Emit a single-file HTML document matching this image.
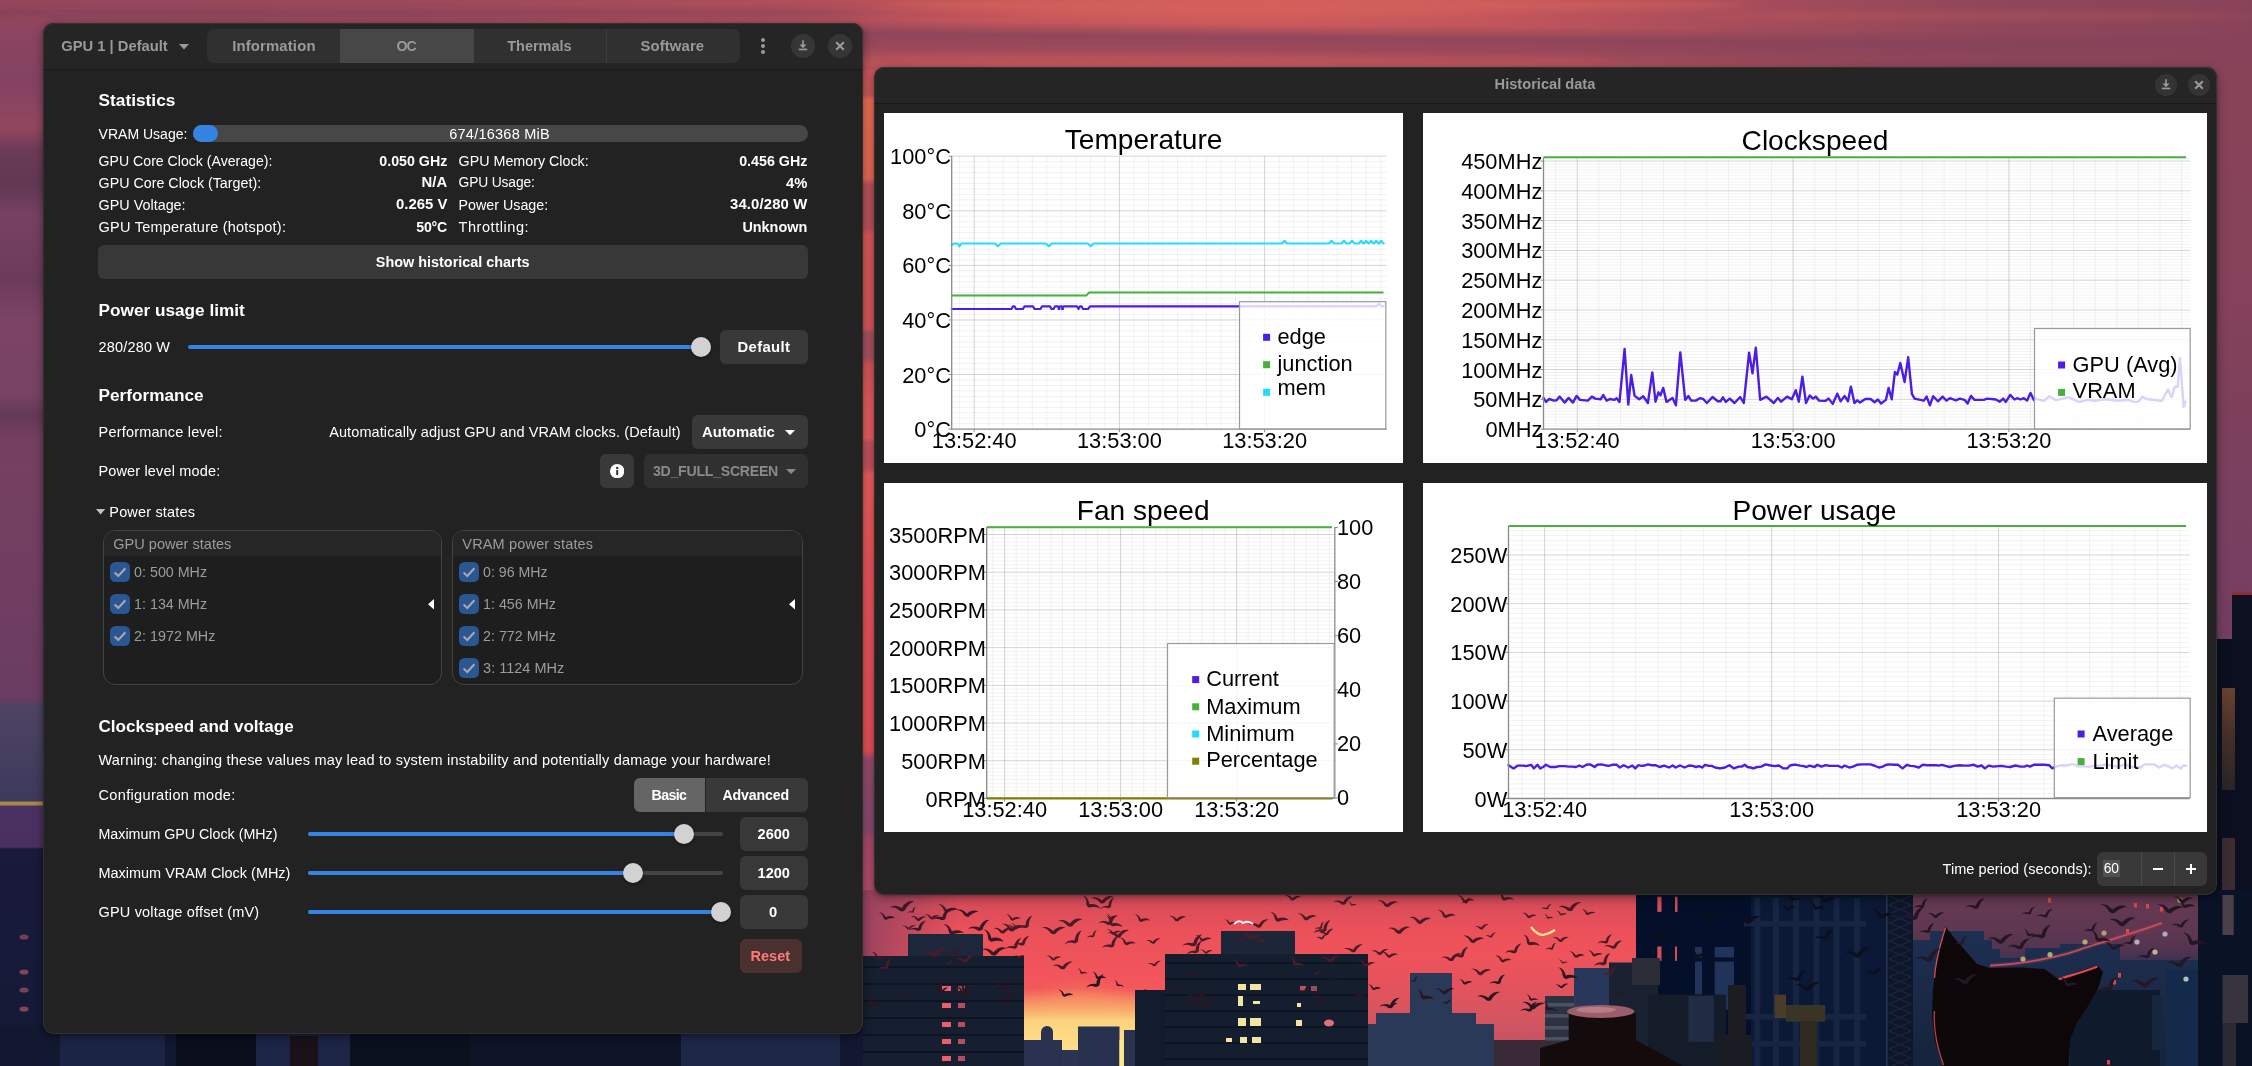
<!DOCTYPE html>
<html><head><meta charset="utf-8"><title>LACT</title><style>
html,body{margin:0;padding:0}
body{width:2252px;height:1066px;overflow:hidden;position:relative;background:#8c4560;font-family:"Liberation Sans",sans-serif}
#root{position:absolute;left:0;top:0;width:2252px;height:1066px;overflow:hidden;will-change:transform}
.b{position:absolute;display:block}
.t{position:absolute;white-space:pre;display:block}
.win{box-shadow:0 3px 10px 1px rgba(0,0,0,.30),0 1px 3px rgba(0,0,0,.22)}
</style></head>
<body><div id="root">
<svg class="b" style="left:0;top:0" width="2252" height="1066" viewBox="0 0 2252 1066"><defs><linearGradient id="top" x1="0" y1="0" x2="1" y2="0"><stop offset="0.0" stop-color="#93465b"/><stop offset="0.1776" stop-color="#9b485b"/><stop offset="0.3552" stop-color="#b04f5a"/><stop offset="0.444" stop-color="#c4565a"/><stop offset="0.5551" stop-color="#cc5b5b"/><stop offset="0.6661" stop-color="#c2555c"/><stop offset="0.7771" stop-color="#a64c5b"/><stop offset="0.8881" stop-color="#90465a"/><stop offset="1.0" stop-color="#894358"/></linearGradient><filter id="bl4" x="-5%" y="-200%" width="110%" height="500%"><feGaussianBlur stdDeviation="14 3"/></filter><linearGradient id="band" x1="0" y1="0" x2="0" y2="1"><stop offset="0" stop-color="#84425a" stop-opacity="0"/><stop offset=".3" stop-color="#84425a" stop-opacity=".8"/><stop offset=".6" stop-color="#8a4459" stop-opacity=".7"/><stop offset="1" stop-color="#8a4459" stop-opacity="0"/></linearGradient><linearGradient id="band2" x1="0" y1="0" x2="0" y2="1"><stop offset="0" stop-color="#7c3e58" stop-opacity="0"/><stop offset=".5" stop-color="#7c3e58" stop-opacity=".45"/><stop offset="1" stop-color="#7c3e58" stop-opacity="0"/></linearGradient><filter id="bl5" x="-10%" y="-100%" width="120%" height="300%"><feGaussianBlur stdDeviation="40 1"/></filter><linearGradient id="left" gradientUnits="userSpaceOnUse" x1="0" y1="20" x2="0" y2="1066"><stop offset="0.0" stop-color="#8f4560"/><stop offset="0.0574" stop-color="#834262"/><stop offset="0.1033" stop-color="#92475e"/><stop offset="0.1243" stop-color="#6c3b57"/><stop offset="0.1577" stop-color="#613853"/><stop offset="0.1864" stop-color="#784162"/><stop offset="0.2486" stop-color="#6c3b5a"/><stop offset="0.2868" stop-color="#7c4464"/><stop offset="0.3585" stop-color="#774263"/><stop offset="0.3776" stop-color="#633a55"/><stop offset="0.4015" stop-color="#754060"/><stop offset="0.4904" stop-color="#733f61"/><stop offset="0.6501" stop-color="#6a3c62"/><stop offset="0.6558" stop-color="#4e4464"/><stop offset="0.7467" stop-color="#3d3a5b"/><stop offset="0.7476" stop-color="#a88848"/><stop offset="0.7505" stop-color="#a88848"/><stop offset="0.7514" stop-color="#4b3162"/><stop offset="0.7906" stop-color="#4a3060"/><stop offset="0.7925" stop-color="#1a1a3a"/><stop offset="1.0" stop-color="#141a36"/></linearGradient><linearGradient id="gap" gradientUnits="userSpaceOnUse" x1="0" y1="55" x2="0" y2="900"><stop offset="0.0" stop-color="#c2525e"/><stop offset="0.0473" stop-color="#cc5a58"/><stop offset="0.0533" stop-color="#ee6e54"/><stop offset="0.1456" stop-color="#ea6a55"/><stop offset="0.1538" stop-color="#bc525c"/><stop offset="0.2047" stop-color="#bd535d"/><stop offset="0.213" stop-color="#de585c"/><stop offset="0.3231" stop-color="#dc575c"/><stop offset="0.329" stop-color="#ae5260"/><stop offset="0.3586" stop-color="#af5260"/><stop offset="0.3657" stop-color="#d6575c"/><stop offset="0.4083" stop-color="#e85c5e"/><stop offset="0.4533" stop-color="#ee5d5f"/><stop offset="0.4592" stop-color="#c6535d"/><stop offset="0.4888" stop-color="#c8535d"/><stop offset="0.4959" stop-color="#f45d5f"/><stop offset="0.5976" stop-color="#f0565b"/><stop offset="0.8225" stop-color="#ec5058"/><stop offset="0.8343" stop-color="#9a4c70"/><stop offset="0.9172" stop-color="#8c4c72"/><stop offset="0.929" stop-color="#ac4a6c"/><stop offset="1.0" stop-color="#ba4d6c"/></linearGradient><linearGradient id="right" gradientUnits="userSpaceOnUse" x1="0" y1="55" x2="0" y2="640"><stop offset="0.0" stop-color="#894358"/><stop offset="0.4188" stop-color="#85425a"/><stop offset="0.6239" stop-color="#7c405c"/><stop offset="0.7607" stop-color="#7a4060"/><stop offset="1.0" stop-color="#743e60"/></linearGradient><linearGradient id="panel" x1="0" y1="0" x2="0" y2="1"><stop offset="0" stop-color="#6a4230"/><stop offset="0.45" stop-color="#46302a"/><stop offset="1" stop-color="#2a2428"/></linearGradient><linearGradient id="sky2" gradientUnits="userSpaceOnUse" x1="0" y1="890" x2="0" y2="1066"><stop offset="0.0" stop-color="#cf4a58"/><stop offset="0.2386" stop-color="#ec515a"/><stop offset="0.5398" stop-color="#f3565b"/><stop offset="0.7102" stop-color="#f2625c"/><stop offset="0.8523" stop-color="#ec6a62"/><stop offset="1.0" stop-color="#e26a66"/></linearGradient><linearGradient id="mv" x1="0" y1="0" x2="0" y2="1"><stop offset="0" stop-color="#8c4162"/><stop offset="1" stop-color="#8c4162"/></linearGradient><linearGradient id="mvx" x1="0" y1="0" x2="1" y2="0"><stop offset="0" stop-color="#8c4162" stop-opacity=".85"/><stop offset="1" stop-color="#8c4162" stop-opacity="0"/></linearGradient><radialGradient id="glow" gradientUnits="userSpaceOnUse" cx="1082" cy="1082" r="105"><stop offset="0" stop-color="#fff08a"/><stop offset=".45" stop-color="#fbd67a" stop-opacity=".95"/><stop offset="1" stop-color="#f6905e" stop-opacity="0"/></radialGradient><linearGradient id="hz" gradientUnits="userSpaceOnUse" x1="0" y1="989" x2="0" y2="1066"><stop offset="0" stop-color="#f79a66" stop-opacity="0"/><stop offset=".22" stop-color="#f8a268" stop-opacity=".9"/><stop offset=".42" stop-color="#fbd47e"/><stop offset="1" stop-color="#fde68c"/></linearGradient><linearGradient id="dk" gradientUnits="userSpaceOnUse" x1="0" y1="955" x2="0" y2="1045"><stop offset="0" stop-color="#b04460" stop-opacity="0"/><stop offset="1" stop-color="#b04460" stop-opacity=".65"/></linearGradient><linearGradient id="sky3" gradientUnits="userSpaceOnUse" x1="0" y1="890" x2="0" y2="1066"><stop offset="0.0" stop-color="#683952"/><stop offset="0.2273" stop-color="#5f3750"/><stop offset="0.3409" stop-color="#523450"/><stop offset="0.4091" stop-color="#383252"/><stop offset="0.483" stop-color="#1c2b4a"/><stop offset="1.0" stop-color="#16243e"/></linearGradient><linearGradient id="bl" gradientUnits="userSpaceOnUse" x1="0" y1="930" x2="0" y2="1066"><stop offset="0.0" stop-color="#1e2f52"/><stop offset="0.5147" stop-color="#1a2946"/><stop offset="1.0" stop-color="#15233c"/></linearGradient></defs><rect x="0.0" y="0.0" width="2252.0" height="120.0" fill="url(#top)" /><g transform="rotate(0.55 860 40)"><rect x="700" y="20" width="1700" height="44" fill="url(#band)"/></g><rect x="-100" y="4" width="960" height="18" fill="url(#band2)" filter="url(#bl5)"/><ellipse cx="1315.0" cy="5" rx="435.0" ry="7" fill="#e26a5c" opacity="0.4" filter="url(#bl4)"/><ellipse cx="1250.0" cy="14" rx="250.0" ry="4" fill="#e26a5c" opacity="0.3" filter="url(#bl4)"/><ellipse cx="1976.0" cy="16" rx="276.0" ry="5" fill="#e26a5c" opacity="0.18" filter="url(#bl4)"/><rect x="700" y="56" width="900" height="14" fill="#c0545a" opacity=".35" filter="url(#bl4)"/><rect x="0.0" y="20.0" width="60.0" height="1046.0" fill="url(#left)" /><ellipse cx="24" cy="937" rx="4.5" ry="2.6" fill="#b05a6c" opacity=".6"/><ellipse cx="24" cy="972" rx="4.5" ry="2.6" fill="#c06474" opacity=".6"/><ellipse cx="24" cy="990" rx="4.5" ry="2.6" fill="#b86070" opacity=".6"/><ellipse cx="24" cy="1009" rx="4.5" ry="2.6" fill="#c86878" opacity=".6"/><ellipse cx="24" cy="1030" rx="4.5" ry="2.6" fill="#a85868" opacity=".6"/><rect x="6.0" y="1026.0" width="8.0" height="8.0" fill="#2c3c70" /><rect x="861.0" y="70.0" width="14.5" height="830.0" fill="url(#gap)" /><rect x="2205.0" y="55.0" width="47.0" height="585.0" fill="url(#right)" /><rect x="2232.0" y="592.0" width="20.0" height="48.0" fill="#0e1122" /><rect x="2232.0" y="592.0" width="20.0" height="3.0" fill="#8a3038" /><rect x="2205.0" y="639.0" width="47.0" height="427.0" fill="#0b0f1f" /><rect x="2222.0" y="688.0" width="13.0" height="102.0" fill="url(#panel)" /><rect x="2222.0" y="838.0" width="13.0" height="92.0" fill="#3a2c30" /><rect x="2222.0" y="975.0" width="13.0" height="65.0" fill="#2e2a34" /><rect x="0.0" y="1025.0" width="870.0" height="41.0" fill="#121830" /><rect x="60.0" y="1033.0" width="105.0" height="33.0" fill="#1b2444" /><rect x="256.0" y="1033.0" width="94.0" height="33.0" fill="#1c2546" /><rect x="681.0" y="1033.0" width="159.0" height="33.0" fill="#1e2748" /><rect x="176.0" y="1033.0" width="80.0" height="33.0" fill="#0b0f1c" /><rect x="350.0" y="1033.0" width="120.0" height="33.0" fill="#0c111f" /><rect x="470.0" y="1033.0" width="211.0" height="33.0" fill="#0d1526" /><rect x="290.0" y="1036.0" width="28.0" height="30.0" fill="#1a1218" /><rect x="863.0" y="890.0" width="777.0" height="176.0" fill="url(#sky2)" /><rect x="863.0" y="890.0" width="97.0" height="70.0" fill="url(#mvx)" /><rect x="1000.0" y="950.0" width="180.0" height="116.0" fill="url(#glow)" /><rect x="1022.0" y="989.0" width="114.0" height="77.0" fill="url(#hz)" /><rect x="908.0" y="934.0" width="75.0" height="23.0" fill="#1c273c" /><rect x="863.0" y="956.0" width="161.0" height="110.0" fill="#161f30" /><rect x="942.0" y="986.0" width="9.0" height="5.0" fill="#ee5e6a" /><rect x="958.0" y="986.0" width="7.0" height="5.0" fill="#b84c5c" /><rect x="942.0" y="1003.0" width="9.0" height="5.0" fill="#ee5e6a" /><rect x="958.0" y="1003.0" width="7.0" height="5.0" fill="#b84c5c" /><rect x="942.0" y="1022.0" width="9.0" height="5.0" fill="#ee5e6a" /><rect x="958.0" y="1022.0" width="7.0" height="5.0" fill="#b84c5c" /><rect x="942.0" y="1039.0" width="9.0" height="5.0" fill="#ee5e6a" /><rect x="958.0" y="1039.0" width="7.0" height="5.0" fill="#b84c5c" /><rect x="942.0" y="1056.0" width="9.0" height="5.0" fill="#ee5e6a" /><rect x="958.0" y="1056.0" width="7.0" height="5.0" fill="#b84c5c" /><rect x="863.0" y="966.0" width="161.0" height="2.0" fill="#0e1424" /><rect x="863.0" y="983.0" width="161.0" height="2.0" fill="#0e1424" /><rect x="863.0" y="1000.0" width="161.0" height="2.0" fill="#0e1424" /><rect x="863.0" y="1017.0" width="161.0" height="2.0" fill="#0e1424" /><rect x="863.0" y="1034.0" width="161.0" height="2.0" fill="#0e1424" /><rect x="863.0" y="1051.0" width="161.0" height="2.0" fill="#0e1424" /><rect x="1024.0" y="1040.0" width="38.0" height="26.0" fill="#2a3250" /><rect x="1041.0" y="1032.0" width="12.0" height="9.0" fill="#2a3250" /><circle cx="1047" cy="1032" r="6" fill="#2a3250"/><rect x="1078.0" y="1026.5" width="41.5" height="39.5" fill="#28314e" /><rect x="1062.0" y="1050.0" width="16.0" height="16.0" fill="#2c3452" /><rect x="1119.5" y="1040.0" width="3.5" height="26.0" fill="#ffe78a" /><rect x="1124.0" y="1030.0" width="12.0" height="36.0" fill="#2a3250" /><rect x="1221.0" y="931.0" width="74.0" height="24.0" fill="#1b2638" /><rect x="1165.0" y="954.0" width="203.0" height="112.0" fill="#151e2e" /><rect x="1135.0" y="990.0" width="31.0" height="76.0" fill="#131c2e" /><rect x="1165.0" y="962.0" width="203.0" height="2.0" fill="#0d1422" /><rect x="1165.0" y="978.0" width="203.0" height="2.0" fill="#0d1422" /><rect x="1165.0" y="994.0" width="203.0" height="2.0" fill="#0d1422" /><rect x="1165.0" y="1010.0" width="203.0" height="2.0" fill="#0d1422" /><rect x="1165.0" y="1026.0" width="203.0" height="2.0" fill="#0d1422" /><rect x="1165.0" y="1042.0" width="203.0" height="2.0" fill="#0d1422" /><rect x="1165.0" y="1058.0" width="203.0" height="2.0" fill="#0d1422" /><rect x="1238.0" y="984.0" width="8.0" height="6.0" fill="#f0e6a2" /><rect x="1250.0" y="984.0" width="11.0" height="6.0" fill="#f0e6a2" /><rect x="1238.0" y="996.0" width="5.0" height="10.0" fill="#f0e6a2" /><rect x="1253.0" y="1001.0" width="7.0" height="3.0" fill="#f0e6a2" /><rect x="1238.0" y="1018.0" width="8.0" height="8.0" fill="#f0e6a2" /><rect x="1250.0" y="1018.0" width="11.0" height="8.0" fill="#f0e6a2" /><rect x="1226.0" y="1038.0" width="6.0" height="4.0" fill="#f0e6a2" /><rect x="1240.0" y="1037.0" width="7.0" height="6.0" fill="#f0e6a2" /><rect x="1252.0" y="1037.0" width="9.0" height="6.0" fill="#f0e6a2" /><rect x="1296.0" y="1020.0" width="6.0" height="6.0" fill="#f0e6a2" /><rect x="1297.0" y="1003.0" width="4.0" height="4.0" fill="#f0e6a2" /><rect x="1300.0" y="986.0" width="6.0" height="5.0" fill="#c05060" /><rect x="1311.0" y="986.0" width="6.0" height="5.0" fill="#a04858" /><ellipse cx="1329" cy="1023" rx="5" ry="3.5" fill="#e07080"/><rect x="1368.0" y="955.0" width="272.0" height="111.0" fill="url(#dk)" /><rect x="1410.0" y="973.0" width="42.0" height="93.0" fill="#2a3958" /><rect x="1376.0" y="1013.0" width="100.0" height="53.0" fill="#2a3958" /><rect x="1368.0" y="1024.0" width="126.0" height="42.0" fill="#2a3958" /><rect x="1574.0" y="968.0" width="66.0" height="98.0" fill="#28385a" /><rect x="1552.0" y="996.0" width="24.0" height="70.0" fill="#2c3b5c" /><rect x="1494.0" y="1040.0" width="66.0" height="26.0" fill="#3a2a38" /><rect x="1636.0" y="890.0" width="277.0" height="176.0" fill="#04102a" /><rect x="1751.0" y="890.0" width="135.0" height="176.0" fill="#0c1936" /><rect x="1754.3" y="898.0" width="6.0" height="168.0" fill="#162542" /><rect x="1772.9" y="898.0" width="6.0" height="168.0" fill="#162542" /><rect x="1793.0" y="898.0" width="6.0" height="168.0" fill="#162542" /><rect x="1813.4" y="898.0" width="6.0" height="168.0" fill="#162542" /><rect x="1833.6" y="898.0" width="6.0" height="168.0" fill="#162542" /><rect x="1853.9" y="898.0" width="6.0" height="168.0" fill="#162542" /><rect x="1744.0" y="921.0" width="122.0" height="5.5" fill="#162542" /><rect x="1744.0" y="1014.0" width="122.0" height="5.5" fill="#162542" /><rect x="1744.0" y="1041.0" width="122.0" height="5.5" fill="#162542" /><rect x="1695.0" y="947.0" width="7.0" height="10.4" fill="#22335a" /><rect x="1695.0" y="961.7" width="7.0" height="32.9" fill="#22335a" /><rect x="1714.7" y="947.0" width="19.3" height="10.4" fill="#22335a" /><rect x="1714.7" y="961.7" width="19.3" height="48.0" fill="#22335a" /><rect x="1657.3" y="896.7" width="4.2" height="15.2" fill="#d24c5a" /><rect x="1675.0" y="896.7" width="2.5" height="15.2" fill="#d24c5a" /><rect x="1657.3" y="946.5" width="4.2" height="14.3" fill="#d24c5a" /><rect x="1675.0" y="946.5" width="2.0" height="14.3" fill="#d24c5a" /><rect x="1609.0" y="962.5" width="49.0" height="103.5" fill="#1a2232" /><rect x="1632.0" y="958.0" width="28.0" height="27.0" fill="#2a2c38" /><rect x="1648.0" y="994.6" width="78.0" height="71.4" fill="#141c2a" /><rect x="1688.5" y="996.0" width="25.3" height="45.8" fill="#1f2c44" /><rect x="1728.0" y="985.0" width="18.0" height="81.0" fill="#1c1c22" /><rect x="1716.0" y="1035.0" width="36.0" height="31.0" fill="#1a1c24" /><rect x="1774.6" y="994.6" width="11.4" height="23.4" fill="#4a3c26" /><rect x="1786.0" y="1005.0" width="39.2" height="16.6" fill="#3a3424" /><rect x="1800.0" y="1021.0" width="16.8" height="45.0" fill="#2e2a22" /><rect x="1886.0" y="890.0" width="27.0" height="176.0" fill="#0d1729" /><rect x="1886.0" y="890.0" width="1.5" height="176.0" fill="#2a3654" /><path d="M1889 896L1911 905M1911 896L1889 905" stroke="#1c2a44" stroke-width="1"/><path d="M1889 905L1911 914M1911 905L1889 914" stroke="#1c2a44" stroke-width="1"/><path d="M1889 914L1911 923M1911 914L1889 923" stroke="#1c2a44" stroke-width="1"/><path d="M1889 923L1911 932M1911 923L1889 932" stroke="#1c2a44" stroke-width="1"/><path d="M1889 932L1911 941M1911 932L1889 941" stroke="#1c2a44" stroke-width="1"/><path d="M1889 941L1911 950M1911 941L1889 950" stroke="#1c2a44" stroke-width="1"/><path d="M1889 950L1911 959M1911 950L1889 959" stroke="#1c2a44" stroke-width="1"/><path d="M1889 959L1911 968M1911 959L1889 968" stroke="#1c2a44" stroke-width="1"/><path d="M1889 968L1911 977M1911 968L1889 977" stroke="#1c2a44" stroke-width="1"/><path d="M1889 977L1911 986M1911 977L1889 986" stroke="#1c2a44" stroke-width="1"/><path d="M1889 986L1911 995M1911 986L1889 995" stroke="#1c2a44" stroke-width="1"/><path d="M1889 995L1911 1004M1911 995L1889 1004" stroke="#1c2a44" stroke-width="1"/><path d="M1889 1004L1911 1013M1911 1004L1889 1013" stroke="#1c2a44" stroke-width="1"/><path d="M1889 1013L1911 1022M1911 1013L1889 1022" stroke="#1c2a44" stroke-width="1"/><path d="M1889 1022L1911 1031M1911 1022L1889 1031" stroke="#1c2a44" stroke-width="1"/><path d="M1889 1031L1911 1040M1911 1031L1889 1040" stroke="#1c2a44" stroke-width="1"/><path d="M1889 1040L1911 1049M1911 1040L1889 1049" stroke="#1c2a44" stroke-width="1"/><path d="M1889 1049L1911 1058M1911 1049L1889 1058" stroke="#1c2a44" stroke-width="1"/><path d="M1889 1058L1911 1067M1911 1058L1889 1067" stroke="#1c2a44" stroke-width="1"/><rect x="1545.0" y="996.0" width="29.0" height="46.0" fill="#2c3242" /><rect x="1545.0" y="1003.0" width="29.0" height="3.5" fill="#4a5262" /><rect x="1545.0" y="1014.0" width="29.0" height="3.5" fill="#4a5262" /><rect x="1545.0" y="1026.0" width="29.0" height="3.5" fill="#4a5262" /><rect x="1545.0" y="1037.0" width="29.0" height="3.5" fill="#4a5262" /><path d="M1568.7 1013H1636V1040L1683 1066H1540V1048L1568.7 1040Z" fill="#140b0c"/><ellipse cx="1600.7" cy="1011.4" rx="33.7" ry="6.5" fill="#9a5e6c"/><ellipse cx="1596" cy="1009.8" rx="20" ry="3" fill="#c48a96" opacity=".7"/><rect x="1913.0" y="890.0" width="287.0" height="176.0" fill="url(#sky3)" /><path d="M1913 940H1930V931H1984V940H1992V949H2000V958H2025V948H2060V944H2120V960H2200V1066H1913Z" fill="url(#bl)"/><rect x="2166.0" y="970.0" width="33.0" height="96.0" fill="#142a4a" /><rect x="2070.0" y="990.0" width="90.0" height="76.0" fill="#0f1b2d" /><rect x="2152.0" y="995.0" width="10.0" height="55.0" fill="#16263c" /><path d="M1990 965.6C2030 964 2070 954 2084 948C2110 940 2140 931 2162 923" stroke="#d04a55" stroke-width="4.5" fill="none" opacity=".22"/><path d="M1990 965.6C2030 964 2070 954 2084 948C2110 940 2140 931 2162 923" stroke="#d8505a" stroke-width="1.7" fill="none" opacity=".9"/><circle cx="2023" cy="959" r="2.6" fill="#c8cc80" opacity=".8"/><circle cx="2050" cy="954.5" r="2.6" fill="#c8cc80" opacity=".8"/><circle cx="2085" cy="942" r="2.6" fill="#c8c888" opacity=".8"/><circle cx="2104" cy="933" r="2.6" fill="#c0b880" opacity=".8"/><circle cx="2137" cy="942" r="2.6" fill="#c8d0d8" opacity=".8"/><circle cx="2165" cy="934" r="2.6" fill="#c0c8d0" opacity=".8"/><circle cx="2155" cy="952" r="2.6" fill="#d8d8a0" opacity=".8"/><circle cx="2186" cy="979" r="2.6" fill="#e0e0e0" opacity=".8"/><circle cx="2180" cy="900" r="2.6" fill="#c0c070" opacity=".8"/><rect x="2048.0" y="898.0" width="3.0" height="4.5" fill="#d84848" /><rect x="2134.0" y="903.0" width="3.0" height="4.5" fill="#d84848" /><rect x="2146.0" y="904.0" width="3.0" height="4.5" fill="#d84848" /><rect x="2160.0" y="907.0" width="3.0" height="4.5" fill="#d84848" /><rect x="2126.0" y="929.0" width="3.0" height="4.5" fill="#d84848" /><rect x="2113.0" y="980.0" width="3.0" height="4.5" fill="#d84848" /><rect x="2118.0" y="973.0" width="3.0" height="4.5" fill="#d84848" /><rect x="2107.0" y="1060.0" width="3.0" height="4.5" fill="#d84848" /><rect x="2198.0" y="890.0" width="54.0" height="176.0" fill="#0a1226" /><rect x="2222.5" y="895.0" width="11.2" height="40.0" fill="#4a4048" /><rect x="2222.5" y="975.0" width="25.5" height="48.0" fill="#38343e" /><rect x="2222.5" y="1023.0" width="13.5" height="43.0" fill="#2a2832" /><polygon points="1943.3,1066.0 1934.5,1039.4 1932.1,1015.3 1932.9,991.3 1934.5,975.2 1940.1,947.9 1945.7,927.1 1954.5,938.3 1977.0,964.0 1989.8,968.0 2021.9,967.5 2044.4,969.1 2058.8,979.2 2076.5,972.0 2097.3,965.6 2103.0,972.0 2098.9,986.4 2089.3,1004.1 2076.5,1023.3 2070.1,1039.4 2068.5,1066.0" fill="#0d0709"/><path d="M1945.5 928C1940 945 1935.5 960 1934.6 978" stroke="#dc4e50" stroke-width="1.3" fill="none" opacity=".95"/><path d="M1934.5 1011C1933 1030 1938 1050 1943.5 1065" stroke="#c84a4c" stroke-width="1.3" fill="none" opacity=".9"/><path d="M2059.5 979C2072 975 2086 971 2096.5 967" stroke="#dc4a4a" stroke-width="2.2" fill="none" stroke-linecap="round"/><path transform="translate(1053.2 958.5) rotate(8) scale(0.71 0.60)" d="M-10 -3C-6 -5 -3 -3 0 0C3 -4 7 -6 11 -4C7 -3 4 0 2 3C0 4 -2 3 -3 1C-5 -2 -7 -3 -10 -3Z" fill="#4a1c26"/><path transform="translate(1351.8 904.4) rotate(27) scale(0.46 0.39)" d="M-10 -3C-6 -5 -3 -3 0 0C3 -4 7 -6 11 -4C7 -3 4 0 2 3C0 4 -2 3 -3 1C-5 -2 -7 -3 -10 -3Z" fill="#4a1c26"/><path transform="translate(1069.7 923.5) rotate(-2) scale(1.15 0.97)" d="M-10 -3C-6 -5 -3 -3 0 0C3 -4 7 -6 11 -4C7 -3 4 0 2 3C0 4 -2 3 -3 1C-5 -2 -7 -3 -10 -3Z" fill="#4a1c26"/><path transform="translate(1514.1 950.8) rotate(-28) scale(0.90 0.76)" d="M-10 -3C-6 -5 -3 -3 0 0C3 -4 7 -6 11 -4C7 -3 4 0 2 3C0 4 -2 3 -3 1C-5 -2 -7 -3 -10 -3Z" fill="#4a1c26"/><path transform="translate(1358.8 995.1) rotate(19) scale(0.82 0.69)" d="M-10 -3C-6 -5 -3 -3 0 0C3 -4 7 -6 11 -4C7 -3 4 0 2 3C0 4 -2 3 -3 1C-5 -2 -7 -3 -10 -3Z" fill="#2a1620"/><path transform="translate(1387.0 904.2) rotate(7) scale(0.98 0.83)" d="M-10 -3C-6 -5 -3 -3 0 0C3 -4 7 -6 11 -4C7 -3 4 0 2 3C0 4 -2 3 -3 1C-5 -2 -7 -3 -10 -3Z" fill="#4a1c26"/><path transform="translate(1102.0 900.5) rotate(-2) scale(1.06 0.90)" d="M-10 -3C-6 -5 -3 -3 0 0C3 -4 7 -6 11 -4C7 -3 4 0 2 3C0 4 -2 3 -3 1C-5 -2 -7 -3 -10 -3Z" fill="#4a1c26"/><path transform="translate(1423.5 996.3) rotate(34) scale(0.95 0.81)" d="M-10 -3C-6 -5 -3 -3 0 0C3 -4 7 -6 11 -4C7 -3 4 0 2 3C0 4 -2 3 -3 1C-5 -2 -7 -3 -10 -3Z" fill="#2a1620"/><path transform="translate(1174.1 987.5) rotate(35) scale(0.76 0.65)" d="M-10 -3C-6 -5 -3 -3 0 0C3 -4 7 -6 11 -4C7 -3 4 0 2 3C0 4 -2 3 -3 1C-5 -2 -7 -3 -10 -3Z" fill="#2a1620"/><path transform="translate(1546.7 908.0) rotate(-23) scale(0.55 0.46)" d="M-10 -3C-6 -5 -3 -3 0 0C3 -4 7 -6 11 -4C7 -3 4 0 2 3C0 4 -2 3 -3 1C-5 -2 -7 -3 -10 -3Z" fill="#4a1c26"/><path transform="translate(1613.4 946.3) rotate(-16) scale(0.89 0.76)" d="M-10 -3C-6 -5 -3 -3 0 0C3 -4 7 -6 11 -4C7 -3 4 0 2 3C0 4 -2 3 -3 1C-5 -2 -7 -3 -10 -3Z" fill="#4a1c26"/><path transform="translate(1260.6 940.6) rotate(7) scale(0.70 0.59)" d="M-10 -3C-6 -5 -3 -3 0 0C3 -4 7 -6 11 -4C7 -3 4 0 2 3C0 4 -2 3 -3 1C-5 -2 -7 -3 -10 -3Z" fill="#4a1c26"/><path transform="translate(1319.9 999.2) rotate(34) scale(0.93 0.79)" d="M-10 -3C-6 -5 -3 -3 0 0C3 -4 7 -6 11 -4C7 -3 4 0 2 3C0 4 -2 3 -3 1C-5 -2 -7 -3 -10 -3Z" fill="#2a1620"/><path transform="translate(1529.4 1009.0) rotate(-27) scale(0.92 0.78)" d="M-10 -3C-6 -5 -3 -3 0 0C3 -4 7 -6 11 -4C7 -3 4 0 2 3C0 4 -2 3 -3 1C-5 -2 -7 -3 -10 -3Z" fill="#2a1620"/><path transform="translate(1532.7 1006.0) rotate(6) scale(1.08 0.92)" d="M-10 -3C-6 -5 -3 -3 0 0C3 -4 7 -6 11 -4C7 -3 4 0 2 3C0 4 -2 3 -3 1C-5 -2 -7 -3 -10 -3Z" fill="#2a1620"/><path transform="translate(1419.6 920.9) rotate(6) scale(1.03 0.88)" d="M-10 -3C-6 -5 -3 -3 0 0C3 -4 7 -6 11 -4C7 -3 4 0 2 3C0 4 -2 3 -3 1C-5 -2 -7 -3 -10 -3Z" fill="#4a1c26"/><path transform="translate(1089.4 904.2) rotate(39) scale(1.05 0.89)" d="M-10 -3C-6 -5 -3 -3 0 0C3 -4 7 -6 11 -4C7 -3 4 0 2 3C0 4 -2 3 -3 1C-5 -2 -7 -3 -10 -3Z" fill="#4a1c26"/><path transform="translate(938.2 987.5) rotate(-28) scale(0.74 0.63)" d="M-10 -3C-6 -5 -3 -3 0 0C3 -4 7 -6 11 -4C7 -3 4 0 2 3C0 4 -2 3 -3 1C-5 -2 -7 -3 -10 -3Z" fill="#2a1620"/><path transform="translate(1096.3 983.9) rotate(-36) scale(1.06 0.90)" d="M-10 -3C-6 -5 -3 -3 0 0C3 -4 7 -6 11 -4C7 -3 4 0 2 3C0 4 -2 3 -3 1C-5 -2 -7 -3 -10 -3Z" fill="#2a1620"/><path transform="translate(1343.2 902.1) rotate(-14) scale(0.95 0.81)" d="M-10 -3C-6 -5 -3 -3 0 0C3 -4 7 -6 11 -4C7 -3 4 0 2 3C0 4 -2 3 -3 1C-5 -2 -7 -3 -10 -3Z" fill="#4a1c26"/><path transform="translate(1548.3 1007.8) rotate(40) scale(0.80 0.68)" d="M-10 -3C-6 -5 -3 -3 0 0C3 -4 7 -6 11 -4C7 -3 4 0 2 3C0 4 -2 3 -3 1C-5 -2 -7 -3 -10 -3Z" fill="#2a1620"/><path transform="translate(1108.4 905.7) rotate(-37) scale(0.87 0.74)" d="M-10 -3C-6 -5 -3 -3 0 0C3 -4 7 -6 11 -4C7 -3 4 0 2 3C0 4 -2 3 -3 1C-5 -2 -7 -3 -10 -3Z" fill="#4a1c26"/><path transform="translate(1022.0 943.1) rotate(-28) scale(0.88 0.75)" d="M-10 -3C-6 -5 -3 -3 0 0C3 -4 7 -6 11 -4C7 -3 4 0 2 3C0 4 -2 3 -3 1C-5 -2 -7 -3 -10 -3Z" fill="#4a1c26"/><path transform="translate(902.7 995.1) rotate(37) scale(0.67 0.57)" d="M-10 -3C-6 -5 -3 -3 0 0C3 -4 7 -6 11 -4C7 -3 4 0 2 3C0 4 -2 3 -3 1C-5 -2 -7 -3 -10 -3Z" fill="#2a1620"/><path transform="translate(1560.4 939.7) rotate(2) scale(0.77 0.66)" d="M-10 -3C-6 -5 -3 -3 0 0C3 -4 7 -6 11 -4C7 -3 4 0 2 3C0 4 -2 3 -3 1C-5 -2 -7 -3 -10 -3Z" fill="#4a1c26"/><path transform="translate(1365.8 964.3) rotate(10) scale(0.84 0.72)" d="M-10 -3C-6 -5 -3 -3 0 0C3 -4 7 -6 11 -4C7 -3 4 0 2 3C0 4 -2 3 -3 1C-5 -2 -7 -3 -10 -3Z" fill="#4a1c26"/><path transform="translate(1594.3 954.3) rotate(18) scale(0.75 0.64)" d="M-10 -3C-6 -5 -3 -3 0 0C3 -4 7 -6 11 -4C7 -3 4 0 2 3C0 4 -2 3 -3 1C-5 -2 -7 -3 -10 -3Z" fill="#4a1c26"/><path transform="translate(1053.0 931.0) rotate(2) scale(1.13 0.96)" d="M-10 -3C-6 -5 -3 -3 0 0C3 -4 7 -6 11 -4C7 -3 4 0 2 3C0 4 -2 3 -3 1C-5 -2 -7 -3 -10 -3Z" fill="#4a1c26"/><path transform="translate(1292.3 898.3) rotate(6) scale(0.74 0.63)" d="M-10 -3C-6 -5 -3 -3 0 0C3 -4 7 -6 11 -4C7 -3 4 0 2 3C0 4 -2 3 -3 1C-5 -2 -7 -3 -10 -3Z" fill="#4a1c26"/><path transform="translate(885.4 966.6) rotate(-35) scale(0.89 0.76)" d="M-10 -3C-6 -5 -3 -3 0 0C3 -4 7 -6 11 -4C7 -3 4 0 2 3C0 4 -2 3 -3 1C-5 -2 -7 -3 -10 -3Z" fill="#4a1c26"/><path transform="translate(1353.1 949.7) rotate(-12) scale(0.93 0.79)" d="M-10 -3C-6 -5 -3 -3 0 0C3 -4 7 -6 11 -4C7 -3 4 0 2 3C0 4 -2 3 -3 1C-5 -2 -7 -3 -10 -3Z" fill="#4a1c26"/><path transform="translate(1414.4 980.4) rotate(-35) scale(0.47 0.40)" d="M-10 -3C-6 -5 -3 -3 0 0C3 -4 7 -6 11 -4C7 -3 4 0 2 3C0 4 -2 3 -3 1C-5 -2 -7 -3 -10 -3Z" fill="#2a1620"/><path transform="translate(1390.5 1005.9) rotate(-3) scale(0.63 0.53)" d="M-10 -3C-6 -5 -3 -3 0 0C3 -4 7 -6 11 -4C7 -3 4 0 2 3C0 4 -2 3 -3 1C-5 -2 -7 -3 -10 -3Z" fill="#2a1620"/><path transform="translate(1326.4 933.2) rotate(-15) scale(0.70 0.60)" d="M-10 -3C-6 -5 -3 -3 0 0C3 -4 7 -6 11 -4C7 -3 4 0 2 3C0 4 -2 3 -3 1C-5 -2 -7 -3 -10 -3Z" fill="#4a1c26"/><path transform="translate(1154.2 964.3) rotate(-10) scale(0.66 0.56)" d="M-10 -3C-6 -5 -3 -3 0 0C3 -4 7 -6 11 -4C7 -3 4 0 2 3C0 4 -2 3 -3 1C-5 -2 -7 -3 -10 -3Z" fill="#4a1c26"/><path transform="translate(1464.7 900.0) rotate(19) scale(0.85 0.72)" d="M-10 -3C-6 -5 -3 -3 0 0C3 -4 7 -6 11 -4C7 -3 4 0 2 3C0 4 -2 3 -3 1C-5 -2 -7 -3 -10 -3Z" fill="#4a1c26"/><path transform="translate(1108.7 922.1) rotate(-21) scale(1.01 0.86)" d="M-10 -3C-6 -5 -3 -3 0 0C3 -4 7 -6 11 -4C7 -3 4 0 2 3C0 4 -2 3 -3 1C-5 -2 -7 -3 -10 -3Z" fill="#4a1c26"/><path transform="translate(1014.3 946.2) rotate(-32) scale(0.94 0.80)" d="M-10 -3C-6 -5 -3 -3 0 0C3 -4 7 -6 11 -4C7 -3 4 0 2 3C0 4 -2 3 -3 1C-5 -2 -7 -3 -10 -3Z" fill="#4a1c26"/><path transform="translate(1117.9 934.7) rotate(-5) scale(1.03 0.88)" d="M-10 -3C-6 -5 -3 -3 0 0C3 -4 7 -6 11 -4C7 -3 4 0 2 3C0 4 -2 3 -3 1C-5 -2 -7 -3 -10 -3Z" fill="#4a1c26"/><path transform="translate(1528.8 916.1) rotate(12) scale(0.69 0.58)" d="M-10 -3C-6 -5 -3 -3 0 0C3 -4 7 -6 11 -4C7 -3 4 0 2 3C0 4 -2 3 -3 1C-5 -2 -7 -3 -10 -3Z" fill="#4a1c26"/><path transform="translate(1551.4 948.0) rotate(-30) scale(0.61 0.52)" d="M-10 -3C-6 -5 -3 -3 0 0C3 -4 7 -6 11 -4C7 -3 4 0 2 3C0 4 -2 3 -3 1C-5 -2 -7 -3 -10 -3Z" fill="#4a1c26"/><path transform="translate(1277.8 918.6) rotate(27) scale(1.01 0.86)" d="M-10 -3C-6 -5 -3 -3 0 0C3 -4 7 -6 11 -4C7 -3 4 0 2 3C0 4 -2 3 -3 1C-5 -2 -7 -3 -10 -3Z" fill="#4a1c26"/><path transform="translate(1011.4 928.5) rotate(11) scale(1.02 0.86)" d="M-10 -3C-6 -5 -3 -3 0 0C3 -4 7 -6 11 -4C7 -3 4 0 2 3C0 4 -2 3 -3 1C-5 -2 -7 -3 -10 -3Z" fill="#4a1c26"/><path transform="translate(1490.8 936.0) rotate(-17) scale(0.54 0.46)" d="M-10 -3C-6 -5 -3 -3 0 0C3 -4 7 -6 11 -4C7 -3 4 0 2 3C0 4 -2 3 -3 1C-5 -2 -7 -3 -10 -3Z" fill="#4a1c26"/><path transform="translate(1481.3 927.6) rotate(-7) scale(0.69 0.59)" d="M-10 -3C-6 -5 -3 -3 0 0C3 -4 7 -6 11 -4C7 -3 4 0 2 3C0 4 -2 3 -3 1C-5 -2 -7 -3 -10 -3Z" fill="#4a1c26"/><path transform="translate(1193.2 943.3) rotate(-28) scale(1.09 0.93)" d="M-10 -3C-6 -5 -3 -3 0 0C3 -4 7 -6 11 -4C7 -3 4 0 2 3C0 4 -2 3 -3 1C-5 -2 -7 -3 -10 -3Z" fill="#4a1c26"/><path transform="translate(873.6 1003.6) rotate(39) scale(1.07 0.91)" d="M-10 -3C-6 -5 -3 -3 0 0C3 -4 7 -6 11 -4C7 -3 4 0 2 3C0 4 -2 3 -3 1C-5 -2 -7 -3 -10 -3Z" fill="#2a1620"/><path transform="translate(1204.5 1004.4) rotate(-22) scale(1.10 0.93)" d="M-10 -3C-6 -5 -3 -3 0 0C3 -4 7 -6 11 -4C7 -3 4 0 2 3C0 4 -2 3 -3 1C-5 -2 -7 -3 -10 -3Z" fill="#2a1620"/><path transform="translate(1444.1 991.5) rotate(2) scale(0.91 0.78)" d="M-10 -3C-6 -5 -3 -3 0 0C3 -4 7 -6 11 -4C7 -3 4 0 2 3C0 4 -2 3 -3 1C-5 -2 -7 -3 -10 -3Z" fill="#2a1620"/><path transform="translate(1092.6 935.5) rotate(-35) scale(0.61 0.52)" d="M-10 -3C-6 -5 -3 -3 0 0C3 -4 7 -6 11 -4C7 -3 4 0 2 3C0 4 -2 3 -3 1C-5 -2 -7 -3 -10 -3Z" fill="#4a1c26"/><path transform="translate(1323.3 929.4) rotate(-36) scale(1.02 0.86)" d="M-10 -3C-6 -5 -3 -3 0 0C3 -4 7 -6 11 -4C7 -3 4 0 2 3C0 4 -2 3 -3 1C-5 -2 -7 -3 -10 -3Z" fill="#4a1c26"/><path transform="translate(1565.8 975.4) rotate(32) scale(1.10 0.93)" d="M-10 -3C-6 -5 -3 -3 0 0C3 -4 7 -6 11 -4C7 -3 4 0 2 3C0 4 -2 3 -3 1C-5 -2 -7 -3 -10 -3Z" fill="#2a1620"/><path transform="translate(1562.7 962.2) rotate(20) scale(0.46 0.39)" d="M-10 -3C-6 -5 -3 -3 0 0C3 -4 7 -6 11 -4C7 -3 4 0 2 3C0 4 -2 3 -3 1C-5 -2 -7 -3 -10 -3Z" fill="#4a1c26"/><path transform="translate(1002.3 930.9) rotate(2) scale(0.91 0.78)" d="M-10 -3C-6 -5 -3 -3 0 0C3 -4 7 -6 11 -4C7 -3 4 0 2 3C0 4 -2 3 -3 1C-5 -2 -7 -3 -10 -3Z" fill="#4a1c26"/><path transform="translate(1188.6 1003.1) rotate(-13) scale(0.88 0.75)" d="M-10 -3C-6 -5 -3 -3 0 0C3 -4 7 -6 11 -4C7 -3 4 0 2 3C0 4 -2 3 -3 1C-5 -2 -7 -3 -10 -3Z" fill="#2a1620"/><path transform="translate(1064.4 994.4) rotate(23) scale(0.78 0.67)" d="M-10 -3C-6 -5 -3 -3 0 0C3 -4 7 -6 11 -4C7 -3 4 0 2 3C0 4 -2 3 -3 1C-5 -2 -7 -3 -10 -3Z" fill="#2a1620"/><path transform="translate(1140.9 919.3) rotate(25) scale(0.82 0.70)" d="M-10 -3C-6 -5 -3 -3 0 0C3 -4 7 -6 11 -4C7 -3 4 0 2 3C0 4 -2 3 -3 1C-5 -2 -7 -3 -10 -3Z" fill="#4a1c26"/><path transform="translate(1001.9 986.5) rotate(24) scale(1.10 0.93)" d="M-10 -3C-6 -5 -3 -3 0 0C3 -4 7 -6 11 -4C7 -3 4 0 2 3C0 4 -2 3 -3 1C-5 -2 -7 -3 -10 -3Z" fill="#2a1620"/><path transform="translate(1504.1 897.8) rotate(29) scale(0.89 0.76)" d="M-10 -3C-6 -5 -3 -3 0 0C3 -4 7 -6 11 -4C7 -3 4 0 2 3C0 4 -2 3 -3 1C-5 -2 -7 -3 -10 -3Z" fill="#4a1c26"/><path transform="translate(908.4 927.7) rotate(2) scale(0.64 0.54)" d="M-10 -3C-6 -5 -3 -3 0 0C3 -4 7 -6 11 -4C7 -3 4 0 2 3C0 4 -2 3 -3 1C-5 -2 -7 -3 -10 -3Z" fill="#4a1c26"/><path transform="translate(1195.7 950.4) rotate(-40) scale(0.99 0.84)" d="M-10 -3C-6 -5 -3 -3 0 0C3 -4 7 -6 11 -4C7 -3 4 0 2 3C0 4 -2 3 -3 1C-5 -2 -7 -3 -10 -3Z" fill="#4a1c26"/><path transform="translate(912.2 911.3) rotate(-35) scale(0.54 0.46)" d="M-10 -3C-6 -5 -3 -3 0 0C3 -4 7 -6 11 -4C7 -3 4 0 2 3C0 4 -2 3 -3 1C-5 -2 -7 -3 -10 -3Z" fill="#4a1c26"/><path transform="translate(1620.5 993.6) rotate(0) scale(0.51 0.43)" d="M-10 -3C-6 -5 -3 -3 0 0C3 -4 7 -6 11 -4C7 -3 4 0 2 3C0 4 -2 3 -3 1C-5 -2 -7 -3 -10 -3Z" fill="#2a1620"/><path transform="translate(1113.2 932.5) rotate(12) scale(0.70 0.59)" d="M-10 -3C-6 -5 -3 -3 0 0C3 -4 7 -6 11 -4C7 -3 4 0 2 3C0 4 -2 3 -3 1C-5 -2 -7 -3 -10 -3Z" fill="#4a1c26"/><path transform="translate(1321.7 937.8) rotate(-14) scale(0.58 0.50)" d="M-10 -3C-6 -5 -3 -3 0 0C3 -4 7 -6 11 -4C7 -3 4 0 2 3C0 4 -2 3 -3 1C-5 -2 -7 -3 -10 -3Z" fill="#4a1c26"/><path transform="translate(965.3 959.8) rotate(-10) scale(0.95 0.81)" d="M-10 -3C-6 -5 -3 -3 0 0C3 -4 7 -6 11 -4C7 -3 4 0 2 3C0 4 -2 3 -3 1C-5 -2 -7 -3 -10 -3Z" fill="#4a1c26"/><path transform="translate(931.5 917.2) rotate(8) scale(0.71 0.60)" d="M-10 -3C-6 -5 -3 -3 0 0C3 -4 7 -6 11 -4C7 -3 4 0 2 3C0 4 -2 3 -3 1C-5 -2 -7 -3 -10 -3Z" fill="#4a1c26"/><path transform="translate(1472.6 940.0) rotate(10) scale(1.01 0.86)" d="M-10 -3C-6 -5 -3 -3 0 0C3 -4 7 -6 11 -4C7 -3 4 0 2 3C0 4 -2 3 -3 1C-5 -2 -7 -3 -10 -3Z" fill="#4a1c26"/><path transform="translate(1202.3 939.1) rotate(16) scale(0.80 0.68)" d="M-10 -3C-6 -5 -3 -3 0 0C3 -4 7 -6 11 -4C7 -3 4 0 2 3C0 4 -2 3 -3 1C-5 -2 -7 -3 -10 -3Z" fill="#4a1c26"/><path transform="translate(1193.8 975.4) rotate(-20) scale(0.77 0.66)" d="M-10 -3C-6 -5 -3 -3 0 0C3 -4 7 -6 11 -4C7 -3 4 0 2 3C0 4 -2 3 -3 1C-5 -2 -7 -3 -10 -3Z" fill="#2a1620"/><path transform="translate(1282.6 975.6) rotate(-6) scale(0.50 0.43)" d="M-10 -3C-6 -5 -3 -3 0 0C3 -4 7 -6 11 -4C7 -3 4 0 2 3C0 4 -2 3 -3 1C-5 -2 -7 -3 -10 -3Z" fill="#2a1620"/><path transform="translate(1197.9 996.4) rotate(-10) scale(1.11 0.94)" d="M-10 -3C-6 -5 -3 -3 0 0C3 -4 7 -6 11 -4C7 -3 4 0 2 3C0 4 -2 3 -3 1C-5 -2 -7 -3 -10 -3Z" fill="#2a1620"/><path transform="translate(1561.3 986.4) rotate(-3) scale(0.63 0.54)" d="M-10 -3C-6 -5 -3 -3 0 0C3 -4 7 -6 11 -4C7 -3 4 0 2 3C0 4 -2 3 -3 1C-5 -2 -7 -3 -10 -3Z" fill="#2a1620"/><path transform="translate(964.8 988.9) rotate(31) scale(0.91 0.78)" d="M-10 -3C-6 -5 -3 -3 0 0C3 -4 7 -6 11 -4C7 -3 4 0 2 3C0 4 -2 3 -3 1C-5 -2 -7 -3 -10 -3Z" fill="#2a1620"/><path transform="translate(1480.2 972.4) rotate(5) scale(0.96 0.82)" d="M-10 -3C-6 -5 -3 -3 0 0C3 -4 7 -6 11 -4C7 -3 4 0 2 3C0 4 -2 3 -3 1C-5 -2 -7 -3 -10 -3Z" fill="#4a1c26"/><path transform="translate(949.4 963.4) rotate(-29) scale(0.45 0.39)" d="M-10 -3C-6 -5 -3 -3 0 0C3 -4 7 -6 11 -4C7 -3 4 0 2 3C0 4 -2 3 -3 1C-5 -2 -7 -3 -10 -3Z" fill="#4a1c26"/><path transform="translate(1466.2 902.0) rotate(-32) scale(0.51 0.44)" d="M-10 -3C-6 -5 -3 -3 0 0C3 -4 7 -6 11 -4C7 -3 4 0 2 3C0 4 -2 3 -3 1C-5 -2 -7 -3 -10 -3Z" fill="#4a1c26"/><path transform="translate(1548.0 917.2) rotate(27) scale(0.47 0.40)" d="M-10 -3C-6 -5 -3 -3 0 0C3 -4 7 -6 11 -4C7 -3 4 0 2 3C0 4 -2 3 -3 1C-5 -2 -7 -3 -10 -3Z" fill="#4a1c26"/><path transform="translate(963.4 992.4) rotate(27) scale(0.92 0.78)" d="M-10 -3C-6 -5 -3 -3 0 0C3 -4 7 -6 11 -4C7 -3 4 0 2 3C0 4 -2 3 -3 1C-5 -2 -7 -3 -10 -3Z" fill="#2a1620"/><path transform="translate(1603.4 962.4) rotate(-37) scale(1.01 0.86)" d="M-10 -3C-6 -5 -3 -3 0 0C3 -4 7 -6 11 -4C7 -3 4 0 2 3C0 4 -2 3 -3 1C-5 -2 -7 -3 -10 -3Z" fill="#4a1c26"/><path transform="translate(1460.9 954.8) rotate(-31) scale(0.95 0.81)" d="M-10 -3C-6 -5 -3 -3 0 0C3 -4 7 -6 11 -4C7 -3 4 0 2 3C0 4 -2 3 -3 1C-5 -2 -7 -3 -10 -3Z" fill="#4a1c26"/><path transform="translate(1446.7 1002.6) rotate(-14) scale(0.49 0.42)" d="M-10 -3C-6 -5 -3 -3 0 0C3 -4 7 -6 11 -4C7 -3 4 0 2 3C0 4 -2 3 -3 1C-5 -2 -7 -3 -10 -3Z" fill="#2a1620"/><path transform="translate(1304.3 990.6) rotate(-26) scale(0.62 0.53)" d="M-10 -3C-6 -5 -3 -3 0 0C3 -4 7 -6 11 -4C7 -3 4 0 2 3C0 4 -2 3 -3 1C-5 -2 -7 -3 -10 -3Z" fill="#2a1620"/><path transform="translate(1062.5 966.6) rotate(-9) scale(0.98 0.83)" d="M-10 -3C-6 -5 -3 -3 0 0C3 -4 7 -6 11 -4C7 -3 4 0 2 3C0 4 -2 3 -3 1C-5 -2 -7 -3 -10 -3Z" fill="#4a1c26"/><path transform="translate(1153.0 941.8) rotate(-7) scale(0.70 0.59)" d="M-10 -3C-6 -5 -3 -3 0 0C3 -4 7 -6 11 -4C7 -3 4 0 2 3C0 4 -2 3 -3 1C-5 -2 -7 -3 -10 -3Z" fill="#4a1c26"/><path transform="translate(934.1 953.5) rotate(-7) scale(1.13 0.96)" d="M-10 -3C-6 -5 -3 -3 0 0C3 -4 7 -6 11 -4C7 -3 4 0 2 3C0 4 -2 3 -3 1C-5 -2 -7 -3 -10 -3Z" fill="#4a1c26"/><path transform="translate(1445.5 915.2) rotate(20) scale(0.93 0.79)" d="M-10 -3C-6 -5 -3 -3 0 0C3 -4 7 -6 11 -4C7 -3 4 0 2 3C0 4 -2 3 -3 1C-5 -2 -7 -3 -10 -3Z" fill="#4a1c26"/><path transform="translate(1388.9 955.4) rotate(11) scale(0.79 0.67)" d="M-10 -3C-6 -5 -3 -3 0 0C3 -4 7 -6 11 -4C7 -3 4 0 2 3C0 4 -2 3 -3 1C-5 -2 -7 -3 -10 -3Z" fill="#4a1c26"/><path transform="translate(1561.0 913.9) rotate(20) scale(0.52 0.44)" d="M-10 -3C-6 -5 -3 -3 0 0C3 -4 7 -6 11 -4C7 -3 4 0 2 3C0 4 -2 3 -3 1C-5 -2 -7 -3 -10 -3Z" fill="#4a1c26"/><path transform="translate(1575.8 955.4) rotate(18) scale(0.76 0.65)" d="M-10 -3C-6 -5 -3 -3 0 0C3 -4 7 -6 11 -4C7 -3 4 0 2 3C0 4 -2 3 -3 1C-5 -2 -7 -3 -10 -3Z" fill="#4a1c26"/><path transform="translate(1013.3 927.2) rotate(7) scale(0.59 0.50)" d="M-10 -3C-6 -5 -3 -3 0 0C3 -4 7 -6 11 -4C7 -3 4 0 2 3C0 4 -2 3 -3 1C-5 -2 -7 -3 -10 -3Z" fill="#4a1c26"/><path transform="translate(1112.4 923.3) rotate(36) scale(0.93 0.79)" d="M-10 -3C-6 -5 -3 -3 0 0C3 -4 7 -6 11 -4C7 -3 4 0 2 3C0 4 -2 3 -3 1C-5 -2 -7 -3 -10 -3Z" fill="#4a1c26"/><path transform="translate(1097.8 976.7) rotate(28) scale(0.74 0.63)" d="M-10 -3C-6 -5 -3 -3 0 0C3 -4 7 -6 11 -4C7 -3 4 0 2 3C0 4 -2 3 -3 1C-5 -2 -7 -3 -10 -3Z" fill="#2a1620"/><path transform="translate(1320.2 927.2) rotate(-38) scale(0.60 0.51)" d="M-10 -3C-6 -5 -3 -3 0 0C3 -4 7 -6 11 -4C7 -3 4 0 2 3C0 4 -2 3 -3 1C-5 -2 -7 -3 -10 -3Z" fill="#4a1c26"/><path transform="translate(1239.2 940.3) rotate(-11) scale(0.57 0.48)" d="M-10 -3C-6 -5 -3 -3 0 0C3 -4 7 -6 11 -4C7 -3 4 0 2 3C0 4 -2 3 -3 1C-5 -2 -7 -3 -10 -3Z" fill="#4a1c26"/><path transform="translate(1118.0 984.5) rotate(39) scale(0.55 0.47)" d="M-10 -3C-6 -5 -3 -3 0 0C3 -4 7 -6 11 -4C7 -3 4 0 2 3C0 4 -2 3 -3 1C-5 -2 -7 -3 -10 -3Z" fill="#2a1620"/><path transform="translate(1239.3 964.7) rotate(27) scale(0.78 0.66)" d="M-10 -3C-6 -5 -3 -3 0 0C3 -4 7 -6 11 -4C7 -3 4 0 2 3C0 4 -2 3 -3 1C-5 -2 -7 -3 -10 -3Z" fill="#4a1c26"/><path transform="translate(1502.6 960.0) rotate(18) scale(0.79 0.67)" d="M-10 -3C-6 -5 -3 -3 0 0C3 -4 7 -6 11 -4C7 -3 4 0 2 3C0 4 -2 3 -3 1C-5 -2 -7 -3 -10 -3Z" fill="#4a1c26"/><path transform="translate(1529.6 942.2) rotate(37) scale(0.96 0.82)" d="M-10 -3C-6 -5 -3 -3 0 0C3 -4 7 -6 11 -4C7 -3 4 0 2 3C0 4 -2 3 -3 1C-5 -2 -7 -3 -10 -3Z" fill="#4a1c26"/><path transform="translate(1229.9 922.9) rotate(17) scale(0.61 0.52)" d="M-10 -3C-6 -5 -3 -3 0 0C3 -4 7 -6 11 -4C7 -3 4 0 2 3C0 4 -2 3 -3 1C-5 -2 -7 -3 -10 -3Z" fill="#4a1c26"/><path transform="translate(1390.0 1005.3) rotate(-21) scale(1.05 0.89)" d="M-10 -3C-6 -5 -3 -3 0 0C3 -4 7 -6 11 -4C7 -3 4 0 2 3C0 4 -2 3 -3 1C-5 -2 -7 -3 -10 -3Z" fill="#2a1620"/><path transform="translate(1016.0 926.2) rotate(16) scale(0.58 0.49)" d="M-10 -3C-6 -5 -3 -3 0 0C3 -4 7 -6 11 -4C7 -3 4 0 2 3C0 4 -2 3 -3 1C-5 -2 -7 -3 -10 -3Z" fill="#4a1c26"/><path transform="translate(1531.1 998.7) rotate(29) scale(0.63 0.53)" d="M-10 -3C-6 -5 -3 -3 0 0C3 -4 7 -6 11 -4C7 -3 4 0 2 3C0 4 -2 3 -3 1C-5 -2 -7 -3 -10 -3Z" fill="#2a1620"/><path transform="translate(1111.3 944.8) rotate(-33) scale(0.96 0.82)" d="M-10 -3C-6 -5 -3 -3 0 0C3 -4 7 -6 11 -4C7 -3 4 0 2 3C0 4 -2 3 -3 1C-5 -2 -7 -3 -10 -3Z" fill="#4a1c26"/><path transform="translate(941.3 991.2) rotate(-11) scale(0.65 0.56)" d="M-10 -3C-6 -5 -3 -3 0 0C3 -4 7 -6 11 -4C7 -3 4 0 2 3C0 4 -2 3 -3 1C-5 -2 -7 -3 -10 -3Z" fill="#2a1620"/><path transform="translate(1316.8 973.3) rotate(-13) scale(0.45 0.39)" d="M-10 -3C-6 -5 -3 -3 0 0C3 -4 7 -6 11 -4C7 -3 4 0 2 3C0 4 -2 3 -3 1C-5 -2 -7 -3 -10 -3Z" fill="#4a1c26"/><path transform="translate(1205.9 951.9) rotate(7) scale(0.60 0.51)" d="M-10 -3C-6 -5 -3 -3 0 0C3 -4 7 -6 11 -4C7 -3 4 0 2 3C0 4 -2 3 -3 1C-5 -2 -7 -3 -10 -3Z" fill="#4a1c26"/><path transform="translate(1605.6 941.2) rotate(-30) scale(0.83 0.71)" d="M-10 -3C-6 -5 -3 -3 0 0C3 -4 7 -6 11 -4C7 -3 4 0 2 3C0 4 -2 3 -3 1C-5 -2 -7 -3 -10 -3Z" fill="#4a1c26"/><path transform="translate(1081.6 972.2) rotate(31) scale(0.53 0.45)" d="M-10 -3C-6 -5 -3 -3 0 0C3 -4 7 -6 11 -4C7 -3 4 0 2 3C0 4 -2 3 -3 1C-5 -2 -7 -3 -10 -3Z" fill="#4a1c26"/><path transform="translate(1569.7 908.0) rotate(-10) scale(1.11 0.94)" d="M-10 -3C-6 -5 -3 -3 0 0C3 -4 7 -6 11 -4C7 -3 4 0 2 3C0 4 -2 3 -3 1C-5 -2 -7 -3 -10 -3Z" fill="#4a1c26"/><path transform="translate(1464.8 982.6) rotate(14) scale(0.66 0.56)" d="M-10 -3C-6 -5 -3 -3 0 0C3 -4 7 -6 11 -4C7 -3 4 0 2 3C0 4 -2 3 -3 1C-5 -2 -7 -3 -10 -3Z" fill="#2a1620"/><path transform="translate(1373.6 988.1) rotate(20) scale(0.64 0.54)" d="M-10 -3C-6 -5 -3 -3 0 0C3 -4 7 -6 11 -4C7 -3 4 0 2 3C0 4 -2 3 -3 1C-5 -2 -7 -3 -10 -3Z" fill="#2a1620"/><path transform="translate(1610.2 973.0) rotate(-31) scale(0.83 0.70)" d="M-10 -3C-6 -5 -3 -3 0 0C3 -4 7 -6 11 -4C7 -3 4 0 2 3C0 4 -2 3 -3 1C-5 -2 -7 -3 -10 -3Z" fill="#4a1c26"/><path transform="translate(1250.3 936.8) rotate(14) scale(0.95 0.81)" d="M-10 -3C-6 -5 -3 -3 0 0C3 -4 7 -6 11 -4C7 -3 4 0 2 3C0 4 -2 3 -3 1C-5 -2 -7 -3 -10 -3Z" fill="#4a1c26"/><path transform="translate(1306.1 917.6) rotate(10) scale(0.90 0.77)" d="M-10 -3C-6 -5 -3 -3 0 0C3 -4 7 -6 11 -4C7 -3 4 0 2 3C0 4 -2 3 -3 1C-5 -2 -7 -3 -10 -3Z" fill="#4a1c26"/><path transform="translate(1007.9 997.6) rotate(-30) scale(0.91 0.77)" d="M-10 -3C-6 -5 -3 -3 0 0C3 -4 7 -6 11 -4C7 -3 4 0 2 3C0 4 -2 3 -3 1C-5 -2 -7 -3 -10 -3Z" fill="#2a1620"/><path transform="translate(1587.5 913.0) rotate(18) scale(0.68 0.58)" d="M-10 -3C-6 -5 -3 -3 0 0C3 -4 7 -6 11 -4C7 -3 4 0 2 3C0 4 -2 3 -3 1C-5 -2 -7 -3 -10 -3Z" fill="#4a1c26"/><path transform="translate(1330.0 959.7) rotate(-3) scale(0.90 0.77)" d="M-10 -3C-6 -5 -3 -3 0 0C3 -4 7 -6 11 -4C7 -3 4 0 2 3C0 4 -2 3 -3 1C-5 -2 -7 -3 -10 -3Z" fill="#4a1c26"/><path transform="translate(1110.6 916.9) rotate(17) scale(0.50 0.42)" d="M-10 -3C-6 -5 -3 -3 0 0C3 -4 7 -6 11 -4C7 -3 4 0 2 3C0 4 -2 3 -3 1C-5 -2 -7 -3 -10 -3Z" fill="#4a1c26"/><path transform="translate(1450.9 958.4) rotate(-11) scale(0.97 0.82)" d="M-10 -3C-6 -5 -3 -3 0 0C3 -4 7 -6 11 -4C7 -3 4 0 2 3C0 4 -2 3 -3 1C-5 -2 -7 -3 -10 -3Z" fill="#4a1c26"/><path transform="translate(1074.7 940.3) rotate(-37) scale(1.06 0.90)" d="M-10 -3C-6 -5 -3 -3 0 0C3 -4 7 -6 11 -4C7 -3 4 0 2 3C0 4 -2 3 -3 1C-5 -2 -7 -3 -10 -3Z" fill="#4a1c26"/><path transform="translate(1258.6 924.9) rotate(-12) scale(0.99 0.84)" d="M-10 -3C-6 -5 -3 -3 0 0C3 -4 7 -6 11 -4C7 -3 4 0 2 3C0 4 -2 3 -3 1C-5 -2 -7 -3 -10 -3Z" fill="#4a1c26"/><path transform="translate(1126.3 942.6) rotate(22) scale(0.83 0.70)" d="M-10 -3C-6 -5 -3 -3 0 0C3 -4 7 -6 11 -4C7 -3 4 0 2 3C0 4 -2 3 -3 1C-5 -2 -7 -3 -10 -3Z" fill="#4a1c26"/><path transform="translate(1141.7 992.7) rotate(-18) scale(0.53 0.45)" d="M-10 -3C-6 -5 -3 -3 0 0C3 -4 7 -6 11 -4C7 -3 4 0 2 3C0 4 -2 3 -3 1C-5 -2 -7 -3 -10 -3Z" fill="#2a1620"/><path transform="translate(946.7 909.7) rotate(18) scale(1.00 0.85)" d="M-10 -3C-6 -5 -3 -3 0 0C3 -4 7 -6 11 -4C7 -3 4 0 2 3C0 4 -2 3 -3 1C-5 -2 -7 -3 -10 -3Z" fill="#4a1c26"/><path transform="translate(1012.3 918.4) rotate(19) scale(0.74 0.63)" d="M-10 -3C-6 -5 -3 -3 0 0C3 -4 7 -6 11 -4C7 -3 4 0 2 3C0 4 -2 3 -3 1C-5 -2 -7 -3 -10 -3Z" fill="#4a1c26"/><path transform="translate(1498.1 981.6) rotate(-28) scale(0.86 0.73)" d="M-10 -3C-6 -5 -3 -3 0 0C3 -4 7 -6 11 -4C7 -3 4 0 2 3C0 4 -2 3 -3 1C-5 -2 -7 -3 -10 -3Z" fill="#2a1620"/><path transform="translate(1176.8 918.9) rotate(5) scale(0.82 0.70)" d="M-10 -3C-6 -5 -3 -3 0 0C3 -4 7 -6 11 -4C7 -3 4 0 2 3C0 4 -2 3 -3 1C-5 -2 -7 -3 -10 -3Z" fill="#4a1c26"/><path transform="translate(1025.6 925.3) rotate(-38) scale(1.00 0.85)" d="M-10 -3C-6 -5 -3 -3 0 0C3 -4 7 -6 11 -4C7 -3 4 0 2 3C0 4 -2 3 -3 1C-5 -2 -7 -3 -10 -3Z" fill="#4a1c26"/><path transform="translate(1488.4 997.7) rotate(-9) scale(1.11 0.95)" d="M-10 -3C-6 -5 -3 -3 0 0C3 -4 7 -6 11 -4C7 -3 4 0 2 3C0 4 -2 3 -3 1C-5 -2 -7 -3 -10 -3Z" fill="#2a1620"/><path transform="translate(1295.5 962.9) rotate(38) scale(0.89 0.76)" d="M-10 -3C-6 -5 -3 -3 0 0C3 -4 7 -6 11 -4C7 -3 4 0 2 3C0 4 -2 3 -3 1C-5 -2 -7 -3 -10 -3Z" fill="#4a1c26"/><path transform="translate(1398.7 930.8) rotate(-1) scale(1.05 0.89)" d="M-10 -3C-6 -5 -3 -3 0 0C3 -4 7 -6 11 -4C7 -3 4 0 2 3C0 4 -2 3 -3 1C-5 -2 -7 -3 -10 -3Z" fill="#4a1c26"/><path transform="translate(1333.1 979.1) rotate(22) scale(0.45 0.38)" d="M-10 -3C-6 -5 -3 -3 0 0C3 -4 7 -6 11 -4C7 -3 4 0 2 3C0 4 -2 3 -3 1C-5 -2 -7 -3 -10 -3Z" fill="#2a1620"/><path transform="translate(1379.7 952.6) rotate(-3) scale(0.82 0.69)" d="M-10 -3C-6 -5 -3 -3 0 0C3 -4 7 -6 11 -4C7 -3 4 0 2 3C0 4 -2 3 -3 1C-5 -2 -7 -3 -10 -3Z" fill="#4a1c26"/><path transform="translate(1018.9 956.8) rotate(0) scale(0.48 0.40)" d="M-10 -3C-6 -5 -3 -3 0 0C3 -4 7 -6 11 -4C7 -3 4 0 2 3C0 4 -2 3 -3 1C-5 -2 -7 -3 -10 -3Z" fill="#4a1c26"/><path transform="translate(2098.4 938.3) rotate(32) scale(1.10 0.93)" d="M-10 -3C-6 -5 -3 -3 0 0C3 -4 7 -6 11 -4C7 -3 4 0 2 3C0 4 -2 3 -3 1C-5 -2 -7 -3 -10 -3Z" fill="#251626"/><path transform="translate(2169.0 909.6) rotate(9) scale(1.25 1.07)" d="M-10 -3C-6 -5 -3 -3 0 0C3 -4 7 -6 11 -4C7 -3 4 0 2 3C0 4 -2 3 -3 1C-5 -2 -7 -3 -10 -3Z" fill="#251626"/><path transform="translate(1927.5 930.5) rotate(-30) scale(0.86 0.73)" d="M-10 -3C-6 -5 -3 -3 0 0C3 -4 7 -6 11 -4C7 -3 4 0 2 3C0 4 -2 3 -3 1C-5 -2 -7 -3 -10 -3Z" fill="#251626"/><path transform="translate(2067.7 983.5) rotate(26) scale(0.93 0.79)" d="M-10 -3C-6 -5 -3 -3 0 0C3 -4 7 -6 11 -4C7 -3 4 0 2 3C0 4 -2 3 -3 1C-5 -2 -7 -3 -10 -3Z" fill="#251626"/><path transform="translate(2112.4 909.5) rotate(7) scale(1.30 1.11)" d="M-10 -3C-6 -5 -3 -3 0 0C3 -4 7 -6 11 -4C7 -3 4 0 2 3C0 4 -2 3 -3 1C-5 -2 -7 -3 -10 -3Z" fill="#251626"/><path transform="translate(2179.0 963.6) rotate(-11) scale(1.22 1.04)" d="M-10 -3C-6 -5 -3 -3 0 0C3 -4 7 -6 11 -4C7 -3 4 0 2 3C0 4 -2 3 -3 1C-5 -2 -7 -3 -10 -3Z" fill="#251626"/><path transform="translate(2144.5 983.7) rotate(-4) scale(1.30 1.11)" d="M-10 -3C-6 -5 -3 -3 0 0C3 -4 7 -6 11 -4C7 -3 4 0 2 3C0 4 -2 3 -3 1C-5 -2 -7 -3 -10 -3Z" fill="#251626"/><path transform="translate(2130.2 942.1) rotate(-32) scale(0.78 0.66)" d="M-10 -3C-6 -5 -3 -3 0 0C3 -4 7 -6 11 -4C7 -3 4 0 2 3C0 4 -2 3 -3 1C-5 -2 -7 -3 -10 -3Z" fill="#251626"/><path transform="translate(1935.4 915.6) rotate(-0) scale(0.81 0.69)" d="M-10 -3C-6 -5 -3 -3 0 0C3 -4 7 -6 11 -4C7 -3 4 0 2 3C0 4 -2 3 -3 1C-5 -2 -7 -3 -10 -3Z" fill="#251626"/><path transform="translate(2113.7 947.0) rotate(10) scale(1.00 0.85)" d="M-10 -3C-6 -5 -3 -3 0 0C3 -4 7 -6 11 -4C7 -3 4 0 2 3C0 4 -2 3 -3 1C-5 -2 -7 -3 -10 -3Z" fill="#251626"/><path transform="translate(2000.4 940.2) rotate(-7) scale(1.23 1.05)" d="M-10 -3C-6 -5 -3 -3 0 0C3 -4 7 -6 11 -4C7 -3 4 0 2 3C0 4 -2 3 -3 1C-5 -2 -7 -3 -10 -3Z" fill="#251626"/><path transform="translate(1964.8 980.6) rotate(-9) scale(1.20 1.02)" d="M-10 -3C-6 -5 -3 -3 0 0C3 -4 7 -6 11 -4C7 -3 4 0 2 3C0 4 -2 3 -3 1C-5 -2 -7 -3 -10 -3Z" fill="#251626"/><path transform="translate(2019.5 946.2) rotate(-19) scale(1.12 0.95)" d="M-10 -3C-6 -5 -3 -3 0 0C3 -4 7 -6 11 -4C7 -3 4 0 2 3C0 4 -2 3 -3 1C-5 -2 -7 -3 -10 -3Z" fill="#251626"/><path transform="translate(1913.8 916.4) rotate(-25) scale(1.25 1.06)" d="M-10 -3C-6 -5 -3 -3 0 0C3 -4 7 -6 11 -4C7 -3 4 0 2 3C0 4 -2 3 -3 1C-5 -2 -7 -3 -10 -3Z" fill="#251626"/><path transform="translate(2045.0 915.2) rotate(-23) scale(0.85 0.72)" d="M-10 -3C-6 -5 -3 -3 0 0C3 -4 7 -6 11 -4C7 -3 4 0 2 3C0 4 -2 3 -3 1C-5 -2 -7 -3 -10 -3Z" fill="#251626"/><path transform="translate(2028.9 912.6) rotate(-27) scale(0.72 0.61)" d="M-10 -3C-6 -5 -3 -3 0 0C3 -4 7 -6 11 -4C7 -3 4 0 2 3C0 4 -2 3 -3 1C-5 -2 -7 -3 -10 -3Z" fill="#251626"/><path transform="translate(1961.3 942.6) rotate(-33) scale(0.74 0.63)" d="M-10 -3C-6 -5 -3 -3 0 0C3 -4 7 -6 11 -4C7 -3 4 0 2 3C0 4 -2 3 -3 1C-5 -2 -7 -3 -10 -3Z" fill="#251626"/><path transform="translate(2041.6 934.9) rotate(-31) scale(1.19 1.01)" d="M-10 -3C-6 -5 -3 -3 0 0C3 -4 7 -6 11 -4C7 -3 4 0 2 3C0 4 -2 3 -3 1C-5 -2 -7 -3 -10 -3Z" fill="#251626"/><path transform="translate(2028.7 933.9) rotate(33) scale(0.72 0.61)" d="M-10 -3C-6 -5 -3 -3 0 0C3 -4 7 -6 11 -4C7 -3 4 0 2 3C0 4 -2 3 -3 1C-5 -2 -7 -3 -10 -3Z" fill="#251626"/><path transform="translate(1975.8 905.8) rotate(-23) scale(1.03 0.88)" d="M-10 -3C-6 -5 -3 -3 0 0C3 -4 7 -6 11 -4C7 -3 4 0 2 3C0 4 -2 3 -3 1C-5 -2 -7 -3 -10 -3Z" fill="#251626"/><path transform="translate(2091.6 929.2) rotate(-31) scale(0.79 0.67)" d="M-10 -3C-6 -5 -3 -3 0 0C3 -4 7 -6 11 -4C7 -3 4 0 2 3C0 4 -2 3 -3 1C-5 -2 -7 -3 -10 -3Z" fill="#251626"/><path transform="translate(2121.8 922.6) rotate(-2) scale(1.25 1.06)" d="M-10 -3C-6 -5 -3 -3 0 0C3 -4 7 -6 11 -4C7 -3 4 0 2 3C0 4 -2 3 -3 1C-5 -2 -7 -3 -10 -3Z" fill="#251626"/><path transform="translate(2180.7 925.0) rotate(-16) scale(0.87 0.74)" d="M-10 -3C-6 -5 -3 -3 0 0C3 -4 7 -6 11 -4C7 -3 4 0 2 3C0 4 -2 3 -3 1C-5 -2 -7 -3 -10 -3Z" fill="#251626"/><path transform="translate(2146.8 955.5) rotate(-28) scale(0.94 0.80)" d="M-10 -3C-6 -5 -3 -3 0 0C3 -4 7 -6 11 -4C7 -3 4 0 2 3C0 4 -2 3 -3 1C-5 -2 -7 -3 -10 -3Z" fill="#251626"/><path transform="translate(2108.8 987.1) rotate(-35) scale(1.11 0.95)" d="M-10 -3C-6 -5 -3 -3 0 0C3 -4 7 -6 11 -4C7 -3 4 0 2 3C0 4 -2 3 -3 1C-5 -2 -7 -3 -10 -3Z" fill="#251626"/><path transform="translate(1921.7 905.4) rotate(-32) scale(0.82 0.70)" d="M-10 -3C-6 -5 -3 -3 0 0C3 -4 7 -6 11 -4C7 -3 4 0 2 3C0 4 -2 3 -3 1C-5 -2 -7 -3 -10 -3Z" fill="#251626"/><path transform="translate(1928.5 957.9) rotate(-21) scale(1.33 1.13)" d="M-10 -3C-6 -5 -3 -3 0 0C3 -4 7 -6 11 -4C7 -3 4 0 2 3C0 4 -2 3 -3 1C-5 -2 -7 -3 -10 -3Z" fill="#251626"/><path transform="translate(2192.5 941.3) rotate(29) scale(1.26 1.07)" d="M-10 -3C-6 -5 -3 -3 0 0C3 -4 7 -6 11 -4C7 -3 4 0 2 3C0 4 -2 3 -3 1C-5 -2 -7 -3 -10 -3Z" fill="#251626"/><path transform="translate(2182.8 900.2) rotate(7) scale(0.91 0.78)" d="M-10 -3C-6 -5 -3 -3 0 0C3 -4 7 -6 11 -4C7 -3 4 0 2 3C0 4 -2 3 -3 1C-5 -2 -7 -3 -10 -3Z" fill="#251626"/><path transform="translate(2184.7 905.2) rotate(24) scale(0.91 0.77)" d="M-10 -3C-6 -5 -3 -3 0 0C3 -4 7 -6 11 -4C7 -3 4 0 2 3C0 4 -2 3 -3 1C-5 -2 -7 -3 -10 -3Z" fill="#251626"/><path transform="translate(1669.8 937.2) rotate(13) scale(0.90 0.77)" d="M-10 -3C-6 -5 -3 -3 0 0C3 -4 7 -6 11 -4C7 -3 4 0 2 3C0 4 -2 3 -3 1C-5 -2 -7 -3 -10 -3Z" fill="#0c0f1c"/><path transform="translate(1881.4 915.0) rotate(16) scale(1.14 0.97)" d="M-10 -3C-6 -5 -3 -3 0 0C3 -4 7 -6 11 -4C7 -3 4 0 2 3C0 4 -2 3 -3 1C-5 -2 -7 -3 -10 -3Z" fill="#0c0f1c"/><path transform="translate(1857.3 954.0) rotate(-10) scale(1.25 1.07)" d="M-10 -3C-6 -5 -3 -3 0 0C3 -4 7 -6 11 -4C7 -3 4 0 2 3C0 4 -2 3 -3 1C-5 -2 -7 -3 -10 -3Z" fill="#0c0f1c"/><path transform="translate(1747.8 920.6) rotate(-1) scale(1.17 0.99)" d="M-10 -3C-6 -5 -3 -3 0 0C3 -4 7 -6 11 -4C7 -3 4 0 2 3C0 4 -2 3 -3 1C-5 -2 -7 -3 -10 -3Z" fill="#0c0f1c"/><path transform="translate(1710.1 914.5) rotate(7) scale(1.13 0.96)" d="M-10 -3C-6 -5 -3 -3 0 0C3 -4 7 -6 11 -4C7 -3 4 0 2 3C0 4 -2 3 -3 1C-5 -2 -7 -3 -10 -3Z" fill="#0c0f1c"/><path transform="translate(1824.8 936.8) rotate(-24) scale(0.99 0.84)" d="M-10 -3C-6 -5 -3 -3 0 0C3 -4 7 -6 11 -4C7 -3 4 0 2 3C0 4 -2 3 -3 1C-5 -2 -7 -3 -10 -3Z" fill="#0c0f1c"/><path transform="translate(1824.8 899.4) rotate(18) scale(0.98 0.83)" d="M-10 -3C-6 -5 -3 -3 0 0C3 -4 7 -6 11 -4C7 -3 4 0 2 3C0 4 -2 3 -3 1C-5 -2 -7 -3 -10 -3Z" fill="#0c0f1c"/><path transform="translate(1816.1 907.0) rotate(24) scale(0.84 0.72)" d="M-10 -3C-6 -5 -3 -3 0 0C3 -4 7 -6 11 -4C7 -3 4 0 2 3C0 4 -2 3 -3 1C-5 -2 -7 -3 -10 -3Z" fill="#0c0f1c"/><path transform="translate(1807.0 987.5) rotate(-4) scale(1.22 1.04)" d="M-10 -3C-6 -5 -3 -3 0 0C3 -4 7 -6 11 -4C7 -3 4 0 2 3C0 4 -2 3 -3 1C-5 -2 -7 -3 -10 -3Z" fill="#0c0f1c"/><path transform="translate(1873.2 972.5) rotate(-9) scale(0.90 0.77)" d="M-10 -3C-6 -5 -3 -3 0 0C3 -4 7 -6 11 -4C7 -3 4 0 2 3C0 4 -2 3 -3 1C-5 -2 -7 -3 -10 -3Z" fill="#0c0f1c"/><path transform="translate(1658.7 938.1) rotate(-28) scale(1.27 1.08)" d="M-10 -3C-6 -5 -3 -3 0 0C3 -4 7 -6 11 -4C7 -3 4 0 2 3C0 4 -2 3 -3 1C-5 -2 -7 -3 -10 -3Z" fill="#0c0f1c"/><path transform="translate(1787.9 908.3) rotate(10) scale(0.75 0.64)" d="M-10 -3C-6 -5 -3 -3 0 0C3 -4 7 -6 11 -4C7 -3 4 0 2 3C0 4 -2 3 -3 1C-5 -2 -7 -3 -10 -3Z" fill="#0c0f1c"/><path transform="translate(1702.6 902.0) rotate(10) scale(0.79 0.67)" d="M-10 -3C-6 -5 -3 -3 0 0C3 -4 7 -6 11 -4C7 -3 4 0 2 3C0 4 -2 3 -3 1C-5 -2 -7 -3 -10 -3Z" fill="#0c0f1c"/><path transform="translate(1792.2 898.2) rotate(33) scale(0.84 0.71)" d="M-10 -3C-6 -5 -3 -3 0 0C3 -4 7 -6 11 -4C7 -3 4 0 2 3C0 4 -2 3 -3 1C-5 -2 -7 -3 -10 -3Z" fill="#0c0f1c"/><path transform="translate(1697.2 954.9) rotate(20) scale(0.95 0.81)" d="M-10 -3C-6 -5 -3 -3 0 0C3 -4 7 -6 11 -4C7 -3 4 0 2 3C0 4 -2 3 -3 1C-5 -2 -7 -3 -10 -3Z" fill="#0c0f1c"/><path transform="translate(1797.1 978.2) rotate(-22) scale(1.02 0.87)" d="M-10 -3C-6 -5 -3 -3 0 0C3 -4 7 -6 11 -4C7 -3 4 0 2 3C0 4 -2 3 -3 1C-5 -2 -7 -3 -10 -3Z" fill="#0c0f1c"/><path transform="translate(897.2 886.3) rotate(-27) scale(1.11 0.95)" d="M-10 -3C-6 -5 -3 -3 0 0C3 -4 7 -6 11 -4C7 -3 4 0 2 3C0 4 -2 3 -3 1C-5 -2 -7 -3 -10 -3Z" fill="#3a1826"/><path transform="translate(878.0 957.3) rotate(28) scale(0.80 0.68)" d="M-10 -3C-6 -5 -3 -3 0 0C3 -4 7 -6 11 -4C7 -3 4 0 2 3C0 4 -2 3 -3 1C-5 -2 -7 -3 -10 -3Z" fill="#3a1826"/><path transform="translate(885.7 917.2) rotate(23) scale(0.81 0.69)" d="M-10 -3C-6 -5 -3 -3 0 0C3 -4 7 -6 11 -4C7 -3 4 0 2 3C0 4 -2 3 -3 1C-5 -2 -7 -3 -10 -3Z" fill="#3a1826"/><path transform="translate(951.9 931.3) rotate(26) scale(1.08 0.92)" d="M-10 -3C-6 -5 -3 -3 0 0C3 -4 7 -6 11 -4C7 -3 4 0 2 3C0 4 -2 3 -3 1C-5 -2 -7 -3 -10 -3Z" fill="#3a1826"/><path transform="translate(918.3 928.2) rotate(-27) scale(0.92 0.78)" d="M-10 -3C-6 -5 -3 -3 0 0C3 -4 7 -6 11 -4C7 -3 4 0 2 3C0 4 -2 3 -3 1C-5 -2 -7 -3 -10 -3Z" fill="#3a1826"/><path transform="translate(979.4 927.6) rotate(-21) scale(1.11 0.94)" d="M-10 -3C-6 -5 -3 -3 0 0C3 -4 7 -6 11 -4C7 -3 4 0 2 3C0 4 -2 3 -3 1C-5 -2 -7 -3 -10 -3Z" fill="#3a1826"/><path transform="translate(942.4 917.1) rotate(-30) scale(1.06 0.90)" d="M-10 -3C-6 -5 -3 -3 0 0C3 -4 7 -6 11 -4C7 -3 4 0 2 3C0 4 -2 3 -3 1C-5 -2 -7 -3 -10 -3Z" fill="#3a1826"/><path transform="translate(918.3 918.8) rotate(4) scale(0.74 0.63)" d="M-10 -3C-6 -5 -3 -3 0 0C3 -4 7 -6 11 -4C7 -3 4 0 2 3C0 4 -2 3 -3 1C-5 -2 -7 -3 -10 -3Z" fill="#3a1826"/><path transform="translate(966.9 913.8) rotate(7) scale(1.02 0.87)" d="M-10 -3C-6 -5 -3 -3 0 0C3 -4 7 -6 11 -4C7 -3 4 0 2 3C0 4 -2 3 -3 1C-5 -2 -7 -3 -10 -3Z" fill="#3a1826"/><path transform="translate(901.8 908.0) rotate(-12) scale(1.20 1.02)" d="M-10 -3C-6 -5 -3 -3 0 0C3 -4 7 -6 11 -4C7 -3 4 0 2 3C0 4 -2 3 -3 1C-5 -2 -7 -3 -10 -3Z" fill="#3a1826"/><path transform="translate(928.9 886.7) rotate(-23) scale(0.81 0.69)" d="M-10 -3C-6 -5 -3 -3 0 0C3 -4 7 -6 11 -4C7 -3 4 0 2 3C0 4 -2 3 -3 1C-5 -2 -7 -3 -10 -3Z" fill="#3a1826"/><path transform="translate(991.4 938.1) rotate(34) scale(1.14 0.97)" d="M-10 -3C-6 -5 -3 -3 0 0C3 -4 7 -6 11 -4C7 -3 4 0 2 3C0 4 -2 3 -3 1C-5 -2 -7 -3 -10 -3Z" fill="#3a1826"/><path transform="translate(951.5 954.5) rotate(-6) scale(0.97 0.82)" d="M-10 -3C-6 -5 -3 -3 0 0C3 -4 7 -6 11 -4C7 -3 4 0 2 3C0 4 -2 3 -3 1C-5 -2 -7 -3 -10 -3Z" fill="#3a1826"/><path transform="translate(993.5 952.2) rotate(-1) scale(1.17 1.00)" d="M-10 -3C-6 -5 -3 -3 0 0C3 -4 7 -6 11 -4C7 -3 4 0 2 3C0 4 -2 3 -3 1C-5 -2 -7 -3 -10 -3Z" fill="#3a1826"/><path d="M1234 924q5 -5 9 -1q5 -3 10 1" stroke="#fff" stroke-width="1.8" fill="none"/><path d="M1531 927q6 8 12 8q6 -1 12 -5" stroke="#ffe890" stroke-width="2.2" fill="none"/></svg>
<div class="b win" style="left:43px;top:23px;width:820px;height:1011px;background:#222222;border-radius:11px;"></div>
<div class="b" style="left:43.00px;top:23.00px;width:820.00px;height:46.00px;background:#252525;border-radius:0px;border-radius:11px 11px 0 0;"></div>
<div class="b" style="left:43.00px;top:69.00px;width:820.00px;height:1.00px;background:#191919;border-radius:0px;"></div>
<div class="b" style="left:43px;top:23px;width:820px;height:1011px;border-radius:11px;box-shadow:inset 0 0 0 1px rgba(255,255,255,.065)"></div>
<span class="t" style="left:61.30px;top:38.82px;font-size:14.74px;line-height:14.74px;font-weight:700;color:#9a9a9a;">GPU 1 | Default</span>
<svg class="b" style="left:179px;top:43.5px" width="10" height="6"><path d="M0 0H10L5 5.5Z" fill="#9a9a9a"/></svg>
<div class="b" style="left:207.00px;top:29.00px;width:533.00px;height:34.00px;background:#303030;border-radius:7px;"></div>
<div class="b" style="left:340.00px;top:29.00px;width:134.00px;height:34.00px;background:#474747;border-radius:0px;"></div>
<div class="b" style="left:606.30px;top:29.00px;width:1.00px;height:34.00px;background:#3c3c3c;border-radius:0px;"></div>
<span class="t" style="left:232.20px;top:38.72px;font-size:14.86px;line-height:14.86px;font-weight:700;color:#9a9a9a;letter-spacing:0.156px;">Information</span>
<span class="t" style="left:396.50px;top:39.33px;font-size:14.14px;line-height:14.14px;font-weight:700;color:#9a9a9a;letter-spacing:-1.006px;">OC</span>
<span class="t" style="left:507.30px;top:39.08px;font-size:14.44px;line-height:14.44px;font-weight:700;color:#9a9a9a;">Thermals</span>
<span class="t" style="left:640.40px;top:38.72px;font-size:14.86px;line-height:14.86px;font-weight:700;color:#9a9a9a;letter-spacing:0.133px;">Software</span>
<div class="b" style="left:760.90px;top:38.10px;width:4.00px;height:4.00px;background:#9a9a9a;border-radius:2px;"></div>
<div class="b" style="left:760.90px;top:44.10px;width:4.00px;height:4.00px;background:#9a9a9a;border-radius:2px;"></div>
<div class="b" style="left:760.90px;top:50.10px;width:4.00px;height:4.00px;background:#9a9a9a;border-radius:2px;"></div>
<div class="b" style="left:791.00px;top:34.00px;width:24.00px;height:24.00px;background:#363636;border-radius:12px;"></div>
<div class="b" style="left:828.00px;top:34.00px;width:24.00px;height:24.00px;background:#363636;border-radius:12px;"></div>
<svg class="b" style="left:797px;top:40px" width="12" height="12" viewBox="0 0 12 12"><path d="M5.2 0.3H6.8V4.6H9.6L6 8.2L2.4 4.6H5.2Z" fill="#9a9a9a"/><rect x="1.8" y="8.6" width="8.4" height="1.7" fill="#9a9a9a"/></svg>
<svg class="b" style="left:835px;top:41px" width="10" height="10" viewBox="0 0 10 10"><path d="M1.2 1.2L8.8 8.8M8.8 1.2L1.2 8.8" stroke="#9a9a9a" stroke-width="2.1"/></svg>
<span class="t" style="left:98.60px;top:91.68px;font-size:17.27px;line-height:17.27px;font-weight:700;color:#fff;">Statistics</span>
<span class="t" style="left:98.60px;top:126.82px;font-size:14.03px;line-height:14.03px;font-weight:400;color:#fff;">VRAM Usage:</span>
<div class="b" style="left:193.00px;top:125.00px;width:615.00px;height:17.00px;background:#474747;border-radius:8.5px;"></div>
<div class="b" style="left:193.00px;top:125.00px;width:25.30px;height:17.00px;background:#3584e4;border-radius:8.5px;"></div>
<span class="t" style="left:449.20px;top:126.52px;font-size:14.50px;line-height:14.50px;font-weight:400;color:#fff;letter-spacing:0.252px;">674/16368 MiB</span>
<span class="t" style="left:98.60px;top:154.06px;font-size:14.11px;line-height:14.11px;font-weight:400;color:#fff;">GPU Core Clock (Average):</span>
<span class="t" style="left:379.30px;top:153.96px;font-size:14.23px;line-height:14.23px;font-weight:700;color:#fff;">0.050 GHz</span>
<span class="t" style="left:458.60px;top:153.91px;font-size:14.29px;line-height:14.29px;font-weight:400;color:#fff;">GPU Memory Clock:</span>
<span class="t" style="left:739.20px;top:153.94px;font-size:14.25px;line-height:14.25px;font-weight:700;color:#fff;">0.456 GHz</span>
<span class="t" style="left:98.60px;top:175.92px;font-size:14.27px;line-height:14.27px;font-weight:400;color:#fff;">GPU Core Clock (Target):</span>
<span class="t" style="left:421.50px;top:175.42px;font-size:14.86px;line-height:14.86px;font-weight:700;color:#fff;letter-spacing:0.102px;">N/A</span>
<span class="t" style="left:458.60px;top:176.32px;font-size:13.80px;line-height:13.80px;font-weight:400;color:#fff;letter-spacing:-0.138px;">GPU Usage:</span>
<span class="t" style="left:786.00px;top:175.52px;font-size:14.74px;line-height:14.74px;font-weight:700;color:#fff;">4%</span>
<span class="t" style="left:98.60px;top:197.85px;font-size:14.36px;line-height:14.36px;font-weight:400;color:#fff;">GPU Voltage:</span>
<span class="t" style="left:396.00px;top:197.42px;font-size:14.86px;line-height:14.86px;font-weight:700;color:#fff;letter-spacing:0.011px;">0.265 V</span>
<span class="t" style="left:458.60px;top:197.92px;font-size:14.27px;line-height:14.27px;font-weight:400;color:#fff;">Power Usage:</span>
<span class="t" style="left:730.00px;top:197.42px;font-size:14.86px;line-height:14.86px;font-weight:700;color:#fff;letter-spacing:0.143px;">34.0/280 W</span>
<span class="t" style="left:98.60px;top:219.72px;font-size:14.50px;line-height:14.50px;font-weight:400;color:#fff;letter-spacing:0.219px;">GPU Temperature (hotspot):</span>
<span class="t" style="left:416.20px;top:220.03px;font-size:14.14px;line-height:14.14px;font-weight:700;color:#fff;letter-spacing:-0.163px;">50°C</span>
<span class="t" style="left:458.60px;top:219.72px;font-size:14.50px;line-height:14.50px;font-weight:400;color:#fff;letter-spacing:0.551px;">Throttling:</span>
<span class="t" style="left:742.40px;top:219.79px;font-size:14.42px;line-height:14.42px;font-weight:700;color:#fff;">Unknown</span>
<div class="b" style="left:98.00px;top:245.00px;width:710.00px;height:34.00px;background:#383838;border-radius:6px;"></div>
<span class="t" style="left:375.80px;top:254.50px;font-size:14.41px;line-height:14.41px;font-weight:700;color:#fff;">Show historical charts</span>
<span class="t" style="left:98.60px;top:301.74px;font-size:17.19px;line-height:17.19px;font-weight:700;color:#fff;">Power usage limit</span>
<span class="t" style="left:98.60px;top:339.52px;font-size:14.50px;line-height:14.50px;font-weight:400;color:#fff;letter-spacing:0.157px;">280/280 W</span>
<div class="b" style="left:188.00px;top:345.00px;width:513.00px;height:4.00px;background:#3584e4;border-radius:2px;"></div>
<div class="b" style="left:691.00px;top:337.00px;width:20.00px;height:20.00px;background:#d2d2d2;border-radius:10px;box-shadow:0 1px 3px rgba(0,0,0,.4);"></div>
<div class="b" style="left:720.00px;top:330.00px;width:88.00px;height:34.00px;background:#393939;border-radius:6px;"></div>
<span class="t" style="left:737.40px;top:340.22px;font-size:14.86px;line-height:14.86px;font-weight:700;color:#fff;letter-spacing:0.371px;">Default</span>
<span class="t" style="left:98.60px;top:387.23px;font-size:17.21px;line-height:17.21px;font-weight:700;color:#fff;">Performance</span>
<span class="t" style="left:98.60px;top:425.02px;font-size:14.50px;line-height:14.50px;font-weight:400;color:#fff;letter-spacing:0.175px;">Performance level:</span>
<span class="t" style="left:329.20px;top:425.02px;font-size:14.50px;line-height:14.50px;font-weight:400;color:#fff;letter-spacing:0.098px;">Automatically adjust GPU and VRAM clocks. (Default)</span>
<div class="b" style="left:692.00px;top:415.00px;width:116.00px;height:34.00px;background:#393939;border-radius:6px;"></div>
<span class="t" style="left:702.10px;top:425.12px;font-size:14.86px;line-height:14.86px;font-weight:700;color:#fff;letter-spacing:0.004px;">Automatic</span>
<svg class="b" style="left:785px;top:430.2px" width="10" height="6"><path d="M0 0H10L5 5.2Z" fill="#fff"/></svg>
<span class="t" style="left:98.40px;top:463.52px;font-size:14.50px;line-height:14.50px;font-weight:400;color:#fff;letter-spacing:0.162px;">Power level mode:</span>
<div class="b" style="left:600.00px;top:454.00px;width:34.00px;height:34.00px;background:#393939;border-radius:6px;"></div>
<svg class="b" style="left:609.8px;top:464px" width="14.4" height="14.4" viewBox="0 0 16 16"><circle cx="8" cy="8" r="8" fill="#fff"/><rect x="6.9" y="6.7" width="2.2" height="5.6" fill="#333"/><circle cx="8" cy="4.4" r="1.35" fill="#333"/></svg>
<div class="b" style="left:644.00px;top:454.00px;width:164.00px;height:34.00px;background:#303030;border-radius:6px;"></div>
<span class="t" style="left:653.00px;top:463.83px;font-size:14.14px;line-height:14.14px;font-weight:700;color:#8a8a8a;letter-spacing:-0.264px;">3D_FULL_SCREEN</span>
<svg class="b" style="left:786px;top:469px" width="10" height="6"><path d="M0 0H10L5 5Z" fill="#8a8a8a"/></svg>
<svg class="b" style="left:96.4px;top:509.2px" width="9.2" height="6"><path d="M0 0H9.2L4.6 5.6Z" fill="#c0c0c0"/></svg>
<span class="t" style="left:109.30px;top:504.62px;font-size:14.50px;line-height:14.50px;font-weight:400;color:#fff;letter-spacing:0.169px;">Power states</span>
<div class="b" style="left:103.00px;top:530.00px;width:339.00px;height:155.00px;background:#1e1e1e;border-radius:12px;box-sizing:border-box;border:1px solid #434343;overflow:hidden;"></div>
<div class="b" style="left:104.00px;top:531.00px;width:337.00px;height:25.00px;background:#262626;border-radius:0px;border-radius:11px 11px 0 0;"></div>
<span class="t" style="left:113.30px;top:536.52px;font-size:14.50px;line-height:14.50px;font-weight:400;color:#9c9c9c;letter-spacing:0.021px;">GPU power states</span>
<div class="b" style="left:109.80px;top:562.00px;width:20.00px;height:20.00px;background:#2a5694;border-radius:5.5px;"></div>
<svg class="b" style="left:109.8px;top:562px" width="20" height="20" viewBox="0 0 20 20"><path d="M4.6 10.4L8.3 14L15.4 6.3" fill="none" stroke="#a8a8a8" stroke-width="2.1"/></svg>
<span class="t" style="left:134.10px;top:565.02px;font-size:14.28px;line-height:14.28px;font-weight:400;color:#9c9c9c;">0: 500 MHz</span>
<div class="b" style="left:109.80px;top:594.00px;width:20.00px;height:20.00px;background:#2a5694;border-radius:5.5px;"></div>
<svg class="b" style="left:109.8px;top:594px" width="20" height="20" viewBox="0 0 20 20"><path d="M4.6 10.4L8.3 14L15.4 6.3" fill="none" stroke="#a8a8a8" stroke-width="2.1"/></svg>
<span class="t" style="left:134.10px;top:597.02px;font-size:14.28px;line-height:14.28px;font-weight:400;color:#9c9c9c;">1: 134 MHz</span>
<div class="b" style="left:109.80px;top:626.00px;width:20.00px;height:20.00px;background:#2a5694;border-radius:5.5px;"></div>
<svg class="b" style="left:109.8px;top:626px" width="20" height="20" viewBox="0 0 20 20"><path d="M4.6 10.4L8.3 14L15.4 6.3" fill="none" stroke="#a8a8a8" stroke-width="2.1"/></svg>
<span class="t" style="left:134.10px;top:628.96px;font-size:14.34px;line-height:14.34px;font-weight:400;color:#9c9c9c;">2: 1972 MHz</span>
<svg class="b" style="left:427.7px;top:599.2px" width="6" height="10.4"><path d="M6 0V10.4L0 5.2Z" fill="#fff"/></svg>
<div class="b" style="left:452.00px;top:530.00px;width:351.00px;height:155.00px;background:#1e1e1e;border-radius:12px;box-sizing:border-box;border:1px solid #434343;overflow:hidden;"></div>
<div class="b" style="left:453.00px;top:531.00px;width:349.00px;height:25.00px;background:#262626;border-radius:0px;border-radius:11px 11px 0 0;"></div>
<span class="t" style="left:462.30px;top:536.52px;font-size:14.50px;line-height:14.50px;font-weight:400;color:#9c9c9c;letter-spacing:0.165px;">VRAM power states</span>
<div class="b" style="left:458.80px;top:562.00px;width:20.00px;height:20.00px;background:#2a5694;border-radius:5.5px;"></div>
<svg class="b" style="left:458.8px;top:562px" width="20" height="20" viewBox="0 0 20 20"><path d="M4.6 10.4L8.3 14L15.4 6.3" fill="none" stroke="#a8a8a8" stroke-width="2.1"/></svg>
<span class="t" style="left:483.10px;top:565.10px;font-size:14.18px;line-height:14.18px;font-weight:400;color:#9c9c9c;">0: 96 MHz</span>
<div class="b" style="left:458.80px;top:594.00px;width:20.00px;height:20.00px;background:#2a5694;border-radius:5.5px;"></div>
<svg class="b" style="left:458.8px;top:594px" width="20" height="20" viewBox="0 0 20 20"><path d="M4.6 10.4L8.3 14L15.4 6.3" fill="none" stroke="#a8a8a8" stroke-width="2.1"/></svg>
<span class="t" style="left:483.10px;top:597.03px;font-size:14.26px;line-height:14.26px;font-weight:400;color:#9c9c9c;">1: 456 MHz</span>
<div class="b" style="left:458.80px;top:626.00px;width:20.00px;height:20.00px;background:#2a5694;border-radius:5.5px;"></div>
<svg class="b" style="left:458.8px;top:626px" width="20" height="20" viewBox="0 0 20 20"><path d="M4.6 10.4L8.3 14L15.4 6.3" fill="none" stroke="#a8a8a8" stroke-width="2.1"/></svg>
<span class="t" style="left:483.10px;top:629.03px;font-size:14.26px;line-height:14.26px;font-weight:400;color:#9c9c9c;">2: 772 MHz</span>
<div class="b" style="left:458.80px;top:658.00px;width:20.00px;height:20.00px;background:#2a5694;border-radius:5.5px;"></div>
<svg class="b" style="left:458.8px;top:658px" width="20" height="20" viewBox="0 0 20 20"><path d="M4.6 10.4L8.3 14L15.4 6.3" fill="none" stroke="#a8a8a8" stroke-width="2.1"/></svg>
<span class="t" style="left:483.10px;top:660.82px;font-size:14.50px;line-height:14.50px;font-weight:400;color:#9c9c9c;letter-spacing:0.005px;">3: 1124 MHz</span>
<svg class="b" style="left:788.7px;top:599.2px" width="6" height="10.4"><path d="M6 0V10.4L0 5.2Z" fill="#fff"/></svg>
<span class="t" style="left:98.50px;top:717.86px;font-size:17.06px;line-height:17.06px;font-weight:700;color:#fff;">Clockspeed and voltage</span>
<span class="t" style="left:98.50px;top:752.52px;font-size:14.50px;line-height:14.50px;font-weight:400;color:#fff;letter-spacing:0.195px;">Warning: changing these values may lead to system instability and potentially damage your hardware!</span>
<span class="t" style="left:98.50px;top:788.22px;font-size:14.50px;line-height:14.50px;font-weight:400;color:#fff;letter-spacing:0.344px;">Configuration mode:</span>
<div class="b" style="left:634.00px;top:778.00px;width:71.00px;height:34.00px;background:#656565;border-radius:6px;border-radius:6px 0 0 6px;"></div>
<div class="b" style="left:705.50px;top:778.00px;width:102.50px;height:34.00px;background:#393939;border-radius:6px;border-radius:0 6px 6px 0;"></div>
<span class="t" style="left:651.60px;top:788.13px;font-size:14.14px;line-height:14.14px;font-weight:700;color:#fff;letter-spacing:-0.607px;">Basic</span>
<span class="t" style="left:722.50px;top:788.13px;font-size:14.14px;line-height:14.14px;font-weight:700;color:#fff;letter-spacing:-0.110px;">Advanced</span>
<span class="t" style="left:98.50px;top:826.74px;font-size:14.25px;line-height:14.25px;font-weight:400;color:#fff;">Maximum GPU Clock (MHz)</span>
<div class="b" style="left:308.00px;top:832.00px;width:415.00px;height:4.00px;background:#444444;border-radius:2px;"></div>
<div class="b" style="left:308.00px;top:832.00px;width:375.70px;height:4.00px;background:#3584e4;border-radius:2px;"></div>
<div class="b" style="left:673.70px;top:824.00px;width:20.00px;height:20.00px;background:#d2d2d2;border-radius:10px;box-shadow:0 1px 3px rgba(0,0,0,.4);"></div>
<div class="b" style="left:740.00px;top:817.00px;width:68.00px;height:34.00px;background:#383838;border-radius:6px;"></div>
<span class="t" style="left:757.60px;top:826.87px;font-size:14.56px;line-height:14.56px;font-weight:700;color:#fff;">2600</span>
<span class="t" style="left:98.50px;top:865.56px;font-size:14.46px;line-height:14.46px;font-weight:400;color:#fff;">Maximum VRAM Clock (MHz)</span>
<div class="b" style="left:308.00px;top:871.00px;width:415.00px;height:4.00px;background:#444444;border-radius:2px;"></div>
<div class="b" style="left:308.00px;top:871.00px;width:324.90px;height:4.00px;background:#3584e4;border-radius:2px;"></div>
<div class="b" style="left:622.90px;top:863.00px;width:20.00px;height:20.00px;background:#d2d2d2;border-radius:10px;box-shadow:0 1px 3px rgba(0,0,0,.4);"></div>
<div class="b" style="left:740.00px;top:856.00px;width:68.00px;height:34.00px;background:#383838;border-radius:6px;"></div>
<span class="t" style="left:757.60px;top:865.87px;font-size:14.56px;line-height:14.56px;font-weight:700;color:#fff;">1200</span>
<span class="t" style="left:98.50px;top:904.52px;font-size:14.50px;line-height:14.50px;font-weight:400;color:#fff;letter-spacing:0.172px;">GPU voltage offset (mV)</span>
<div class="b" style="left:308.00px;top:910.00px;width:415.00px;height:4.00px;background:#444444;border-radius:2px;"></div>
<div class="b" style="left:308.00px;top:910.00px;width:412.90px;height:4.00px;background:#3584e4;border-radius:2px;"></div>
<div class="b" style="left:710.90px;top:902.00px;width:20.00px;height:20.00px;background:#d2d2d2;border-radius:10px;box-shadow:0 1px 3px rgba(0,0,0,.4);"></div>
<div class="b" style="left:740.00px;top:895.00px;width:68.00px;height:34.00px;background:#383838;border-radius:6px;"></div>
<span class="t" style="left:769.00px;top:904.72px;font-size:14.74px;line-height:14.74px;font-weight:700;color:#fff;">0</span>
<div class="b" style="left:740.00px;top:939.00px;width:62.00px;height:34.00px;background:#4b3030;border-radius:6px;"></div>
<span class="t" style="left:750.60px;top:949.16px;font-size:14.47px;line-height:14.47px;font-weight:700;color:#ff7b78;">Reset</span>
<div class="b win" style="left:874px;top:67px;width:1343px;height:828px;background:#222222;border-radius:10.5px;"></div>
<div class="b" style="left:874.00px;top:67.00px;width:1343.00px;height:36.00px;background:#252525;border-radius:0px;border-radius:10.5px 10.5px 0 0;"></div>
<div class="b" style="left:874.00px;top:103.00px;width:1343.00px;height:1.00px;background:#191919;border-radius:0px;"></div>
<div class="b" style="left:874px;top:67px;width:1343px;height:828px;border-radius:10.5px;box-shadow:inset 0 0 0 1px rgba(255,255,255,.065)"></div>
<span class="t" style="left:1494.60px;top:77.42px;font-size:14.63px;line-height:14.63px;font-weight:700;color:#9a9a9a;">Historical data</span>
<div class="b" style="left:2155.00px;top:74.00px;width:22.00px;height:22.00px;background:#343434;border-radius:11px;"></div>
<div class="b" style="left:2188.00px;top:74.00px;width:22.00px;height:22.00px;background:#343434;border-radius:11px;"></div>
<svg class="b" style="left:2160px;top:79px" width="12" height="12" viewBox="0 0 12 12"><path d="M5.2 0.3H6.8V4.6H9.6L6 8.2L2.4 4.6H5.2Z" fill="#9a9a9a"/><rect x="1.8" y="8.6" width="8.4" height="1.7" fill="#9a9a9a"/></svg>
<svg class="b" style="left:2194px;top:80px" width="10" height="10" viewBox="0 0 10 10"><path d="M1.2 1.2L8.8 8.8M8.8 1.2L1.2 8.8" stroke="#9a9a9a" stroke-width="2.1"/></svg>
<svg class="b" style="left:884px;top:113px" width="519" height="350" viewBox="884 113 519 350" font-family="Liberation Sans, sans-serif"><rect x="884" y="113" width="519" height="350" fill="#fff"/><path d="M959.68 156.2V429.1M974.20 156.2V429.1M988.72 156.2V429.1M1003.24 156.2V429.1M1017.76 156.2V429.1M1032.28 156.2V429.1M1046.80 156.2V429.1M1061.32 156.2V429.1M1075.84 156.2V429.1M1090.36 156.2V429.1M1104.88 156.2V429.1M1119.40 156.2V429.1M1133.92 156.2V429.1M1148.44 156.2V429.1M1162.96 156.2V429.1M1177.48 156.2V429.1M1192.00 156.2V429.1M1206.52 156.2V429.1M1221.04 156.2V429.1M1235.56 156.2V429.1M1250.08 156.2V429.1M1264.60 156.2V429.1M1279.12 156.2V429.1M1293.64 156.2V429.1M1308.16 156.2V429.1M1322.68 156.2V429.1M1337.20 156.2V429.1M1351.72 156.2V429.1M1366.24 156.2V429.1M1380.76 156.2V429.1M951.7 423.64H1386.6M951.7 418.18H1386.6M951.7 412.73H1386.6M951.7 407.27H1386.6M951.7 401.81H1386.6M951.7 396.35H1386.6M951.7 390.89H1386.6M951.7 385.44H1386.6M951.7 379.98H1386.6M951.7 374.52H1386.6M951.7 369.06H1386.6M951.7 363.60H1386.6M951.7 358.15H1386.6M951.7 352.69H1386.6M951.7 347.23H1386.6M951.7 341.77H1386.6M951.7 336.31H1386.6M951.7 330.86H1386.6M951.7 325.40H1386.6M951.7 319.94H1386.6M951.7 314.48H1386.6M951.7 309.02H1386.6M951.7 303.57H1386.6M951.7 298.11H1386.6M951.7 292.65H1386.6M951.7 287.19H1386.6M951.7 281.73H1386.6M951.7 276.28H1386.6M951.7 270.82H1386.6M951.7 265.36H1386.6M951.7 259.90H1386.6M951.7 254.44H1386.6M951.7 248.99H1386.6M951.7 243.53H1386.6M951.7 238.07H1386.6M951.7 232.61H1386.6M951.7 227.15H1386.6M951.7 221.70H1386.6M951.7 216.24H1386.6M951.7 210.78H1386.6M951.7 205.32H1386.6M951.7 199.86H1386.6M951.7 194.41H1386.6M951.7 188.95H1386.6M951.7 183.49H1386.6M951.7 178.03H1386.6M951.7 172.57H1386.6M951.7 167.12H1386.6M951.7 161.66H1386.6M951.7 156.20H1386.6" stroke="#000" stroke-opacity=".05" stroke-width="1" fill="none"/><path d="M974.20 156.2V429.1M1119.40 156.2V429.1M1264.60 156.2V429.1M951.7 374.52H1386.6M951.7 319.94H1386.6M951.7 265.36H1386.6M951.7 210.78H1386.6M951.7 156.20H1386.6" stroke="#000" stroke-opacity=".12" stroke-width="1" fill="none"/><path d="M951.7 245.2L954.0 243.5L957.5 243.5L959.5 246.3L961.5 243.5L994.9 243.5L997.9 246.3L1000.9 243.5L1045.8 243.5L1048.8 246.3L1051.8 243.5L1087.8 243.5L1090.8 246.3L1093.8 243.5L1282.0 243.5L1284.5 240.8L1287.0 243.5L1329.0 243.5L1331.5 240.8L1334.0 243.5L1341.5 243.5L1344.0 240.8L1346.5 243.5L1349.5 243.5L1352.0 240.8L1354.5 243.5L1359.0 243.5L1361.0 240.8L1363.0 243.0L1364.0 243.5L1366.0 240.8L1368.0 243.0L1369.0 243.5L1371.0 240.8L1373.0 243.0L1374.0 243.5L1376.0 240.8L1378.0 243.0L1379.0 243.5L1381.0 240.8L1383.0 243.0L1383.7 243.5" stroke="#22dcff" stroke-width="2.15" fill="none" stroke-linejoin="round" stroke-linecap="round"/><path d="M951.7 295.4L1086.5 295.4L1089.0 292.6L1383.5 292.6" stroke="#47b03a" stroke-width="2.0" fill="none" stroke-linejoin="round" stroke-linecap="butt"/><path d="M951.7 309.0L1011.0 309.0L1011.5 309.0L1013.0 306.3L1014.5 306.3L1016.0 309.0L1023.0 309.0L1024.5 306.3L1033.0 306.3L1034.5 309.0L1040.5 309.0L1042.0 306.3L1050.0 306.3L1051.5 309.0L1053.5 309.0L1055.0 306.3L1058.0 306.3L1059.5 309.0L1058.5 309.0L1060.0 306.3L1061.5 306.3L1063.0 309.0L1062.0 309.0L1063.5 306.3L1077.0 306.3L1078.5 309.0L1078.5 309.0L1080.0 306.3L1081.5 306.3L1083.0 309.0L1088.0 309.0L1090.0 306.3L1376.5 306.3L1379.0 303.6L1381.5 306.3L1383.7 306.3" stroke="#4a1ee6" stroke-width="2.15" fill="none" stroke-linejoin="round" stroke-linecap="round"/><path d="M951.7 156.2V429.1H1386.6" stroke="#8a8a8a" stroke-width="1.3" fill="none"/><path d="M974.20 429.1v3M1119.40 429.1v3M1264.60 429.1v3M951.7 429.10h-3M951.7 374.52h-3M951.7 319.94h-3M951.7 265.36h-3M951.7 210.78h-3M951.7 156.20h-3" stroke="#8a8a8a" stroke-width="1" fill="none"/><text x="950.9" y="437.1" font-size="21.8" text-anchor="end" fill="#000">0°C</text><text x="950.9" y="382.5" font-size="21.8" text-anchor="end" fill="#000">20°C</text><text x="950.9" y="327.9" font-size="21.8" text-anchor="end" fill="#000">40°C</text><text x="950.9" y="273.4" font-size="21.8" text-anchor="end" fill="#000">60°C</text><text x="950.9" y="218.8" font-size="21.8" text-anchor="end" fill="#000">80°C</text><text x="950.9" y="164.2" font-size="21.8" text-anchor="end" fill="#000">100°C</text><text x="974.2" y="448.1" font-size="21.8" text-anchor="middle" fill="#000">13:52:40</text><text x="1119.4" y="448.1" font-size="21.8" text-anchor="middle" fill="#000">13:53:00</text><text x="1264.6" y="448.1" font-size="21.8" text-anchor="middle" fill="#000">13:53:20</text><text x="1143.6" y="149.2" font-size="28.1" text-anchor="middle" fill="#000">Temperature</text><rect x="1239.5" y="301.7" width="146.29999999999995" height="127.19999999999999" fill="#fff" fill-opacity=".8" stroke="#9a9a9a" stroke-width="1.2"/><rect x="1263.1" y="333.8" width="7" height="7" fill="#4a1ee6"/><text x="1277.5" y="343.7" font-size="21.8" text-anchor="start" fill="#000">edge</text><rect x="1263.1" y="361.2" width="7" height="7" fill="#47b03a"/><text x="1277.5" y="371.4" font-size="21.8" text-anchor="start" fill="#000">junction</text><rect x="1263.1" y="388.8" width="7" height="7" fill="#22dcff"/><text x="1277.5" y="395.0" font-size="21.8" text-anchor="start" fill="#000">mem</text></svg>
<svg class="b" style="left:1423px;top:113px" width="784" height="350" viewBox="1423 113 784 350" font-family="Liberation Sans, sans-serif"><rect x="1423" y="113" width="784" height="350" fill="#fff"/><path d="M1555.72 157.4V429.1M1577.30 157.4V429.1M1598.88 157.4V429.1M1620.46 157.4V429.1M1642.04 157.4V429.1M1663.62 157.4V429.1M1685.20 157.4V429.1M1706.78 157.4V429.1M1728.36 157.4V429.1M1749.94 157.4V429.1M1771.52 157.4V429.1M1793.10 157.4V429.1M1814.68 157.4V429.1M1836.26 157.4V429.1M1857.84 157.4V429.1M1879.42 157.4V429.1M1901.00 157.4V429.1M1922.58 157.4V429.1M1944.16 157.4V429.1M1965.74 157.4V429.1M1987.32 157.4V429.1M2008.90 157.4V429.1M2030.48 157.4V429.1M2052.06 157.4V429.1M2073.64 157.4V429.1M2095.22 157.4V429.1M2116.80 157.4V429.1M2138.38 157.4V429.1M2159.96 157.4V429.1M2181.54 157.4V429.1M1543.5 426.12H2190.3M1543.5 423.14H2190.3M1543.5 420.16H2190.3M1543.5 417.19H2190.3M1543.5 414.21H2190.3M1543.5 411.23H2190.3M1543.5 408.25H2190.3M1543.5 405.27H2190.3M1543.5 402.29H2190.3M1543.5 399.31H2190.3M1543.5 396.34H2190.3M1543.5 393.36H2190.3M1543.5 390.38H2190.3M1543.5 387.40H2190.3M1543.5 384.42H2190.3M1543.5 381.44H2190.3M1543.5 378.47H2190.3M1543.5 375.49H2190.3M1543.5 372.51H2190.3M1543.5 369.53H2190.3M1543.5 366.55H2190.3M1543.5 363.57H2190.3M1543.5 360.59H2190.3M1543.5 357.62H2190.3M1543.5 354.64H2190.3M1543.5 351.66H2190.3M1543.5 348.68H2190.3M1543.5 345.70H2190.3M1543.5 342.72H2190.3M1543.5 339.75H2190.3M1543.5 336.77H2190.3M1543.5 333.79H2190.3M1543.5 330.81H2190.3M1543.5 327.83H2190.3M1543.5 324.85H2190.3M1543.5 321.87H2190.3M1543.5 318.90H2190.3M1543.5 315.92H2190.3M1543.5 312.94H2190.3M1543.5 309.96H2190.3M1543.5 306.98H2190.3M1543.5 304.00H2190.3M1543.5 301.02H2190.3M1543.5 298.05H2190.3M1543.5 295.07H2190.3M1543.5 292.09H2190.3M1543.5 289.11H2190.3M1543.5 286.13H2190.3M1543.5 283.15H2190.3M1543.5 280.18H2190.3M1543.5 277.20H2190.3M1543.5 274.22H2190.3M1543.5 271.24H2190.3M1543.5 268.26H2190.3M1543.5 265.28H2190.3M1543.5 262.30H2190.3M1543.5 259.33H2190.3M1543.5 256.35H2190.3M1543.5 253.37H2190.3M1543.5 250.39H2190.3M1543.5 247.41H2190.3M1543.5 244.43H2190.3M1543.5 241.45H2190.3M1543.5 238.48H2190.3M1543.5 235.50H2190.3M1543.5 232.52H2190.3M1543.5 229.54H2190.3M1543.5 226.56H2190.3M1543.5 223.58H2190.3M1543.5 220.61H2190.3M1543.5 217.63H2190.3M1543.5 214.65H2190.3M1543.5 211.67H2190.3M1543.5 208.69H2190.3M1543.5 205.71H2190.3M1543.5 202.73H2190.3M1543.5 199.76H2190.3M1543.5 196.78H2190.3M1543.5 193.80H2190.3M1543.5 190.82H2190.3M1543.5 187.84H2190.3M1543.5 184.86H2190.3M1543.5 181.88H2190.3M1543.5 178.91H2190.3M1543.5 175.93H2190.3M1543.5 172.95H2190.3M1543.5 169.97H2190.3M1543.5 166.99H2190.3M1543.5 164.01H2190.3M1543.5 161.04H2190.3M1543.5 158.06H2190.3" stroke="#000" stroke-opacity=".05" stroke-width="1" fill="none"/><path d="M1577.30 157.4V429.1M1793.10 157.4V429.1M2008.90 157.4V429.1M1543.5 399.31H2190.3M1543.5 369.53H2190.3M1543.5 339.75H2190.3M1543.5 309.96H2190.3M1543.5 280.18H2190.3M1543.5 250.39H2190.3M1543.5 220.61H2190.3M1543.5 190.82H2190.3M1543.5 161.04H2190.3" stroke="#000" stroke-opacity=".12" stroke-width="1" fill="none"/><path d="M1543.5 397.9L1546.0 401.9L1549.3 399.0L1554.0 400.6L1556.6 400.3L1559.6 396.6L1564.6 402.6L1568.6 397.9L1572.9 402.6L1576.6 395.9L1580.0 399.9L1587.9 400.6L1591.9 396.6L1595.3 398.6L1600.6 399.3L1603.3 395.0L1606.6 400.6L1609.9 399.0L1614.6 399.9L1616.6 398.2L1619.5 401.9L1624.6 348.9L1628.3 404.6L1631.2 375.0L1634.6 395.9L1639.2 399.3L1643.2 396.2L1647.9 403.0L1652.3 372.4L1655.5 401.7L1658.5 392.3L1660.5 395.3L1663.2 387.9L1666.5 401.9L1672.5 397.9L1675.9 405.3L1680.3 352.4L1685.2 399.9L1688.3 395.9L1691.2 400.6L1695.8 400.6L1699.8 398.2L1703.2 399.0L1706.9 403.0L1712.5 397.0L1717.8 401.3L1720.5 401.3L1722.9 397.3L1725.8 401.9L1729.8 398.6L1734.5 403.0L1740.2 397.0L1743.8 403.0L1749.1 352.6L1752.5 373.3L1755.8 347.6L1760.2 399.9L1766.4 396.6L1773.8 403.0L1777.8 397.9L1781.1 401.7L1787.1 396.6L1791.8 399.3L1795.8 390.2L1798.8 401.7L1802.4 376.6L1806.0 403.0L1809.7 395.5L1813.1 398.6L1815.7 396.6L1819.1 400.6L1825.3 400.9L1828.7 398.6L1832.7 403.9L1837.3 393.7L1840.6 401.3L1844.6 395.9L1848.0 401.3L1850.9 386.6L1854.4 403.0L1857.3 400.3L1860.0 402.6L1865.3 399.0L1870.6 399.0L1874.6 402.2L1877.9 399.5L1881.0 403.5L1885.9 399.9L1888.6 387.9L1891.7 399.3L1894.9 372.0L1897.3 374.6L1900.3 363.0L1904.6 382.0L1908.2 357.3L1911.9 393.9L1914.6 398.6L1923.9 400.6L1926.6 396.6L1929.9 405.3L1933.2 396.2L1937.9 401.3L1942.6 396.6L1946.5 400.6L1949.9 398.2L1955.9 400.3L1959.9 398.6L1964.5 399.9L1967.6 403.5L1970.9 395.9L1974.5 399.9L1983.8 399.9L1987.2 398.6L1995.8 399.5L1999.8 401.7L2003.2 398.6L2005.8 401.9L2010.2 394.9L2014.5 399.5L2017.1 398.2L2020.5 399.5L2023.8 398.2L2027.1 400.6L2030.5 392.9L2033.8 399.9L2035.0 398.6L2044.0 400.8L2049.3 396.3L2056.0 400.1L2062.8 398.6L2068.0 397.1L2079.3 401.9L2087.6 399.8L2095.1 400.8L2104.1 399.3L2110.1 399.8L2117.6 400.8L2128.1 399.8L2134.1 401.9L2138.6 401.6L2142.4 396.8L2147.6 399.3L2161.9 400.8L2167.9 389.6L2171.7 397.1L2174.7 386.6L2177.7 386.6L2179.9 358.3L2183.7 406.8L2185.6 401.6" stroke="#4a1ee6" stroke-width="2.4" fill="none" stroke-linejoin="round" stroke-linecap="round"/><path d="M1543.5 157.2L2186.0 157.2" stroke="#47b03a" stroke-width="2.0" fill="none" stroke-linejoin="round" stroke-linecap="butt"/><path d="M1543.5 157.4V429.1H2190.3" stroke="#8a8a8a" stroke-width="1.3" fill="none"/><path d="M1577.30 429.1v3M1793.10 429.1v3M2008.90 429.1v3M1543.5 429.10h-3M1543.5 399.31h-3M1543.5 369.53h-3M1543.5 339.75h-3M1543.5 309.96h-3M1543.5 280.18h-3M1543.5 250.39h-3M1543.5 220.61h-3M1543.5 190.82h-3M1543.5 161.04h-3" stroke="#8a8a8a" stroke-width="1" fill="none"/><text x="1542.3" y="437.1" font-size="21.8" text-anchor="end" fill="#000">0MHz</text><text x="1542.3" y="407.3" font-size="21.8" text-anchor="end" fill="#000">50MHz</text><text x="1542.3" y="377.5" font-size="21.8" text-anchor="end" fill="#000">100MHz</text><text x="1542.3" y="347.7" font-size="21.8" text-anchor="end" fill="#000">150MHz</text><text x="1542.3" y="318.0" font-size="21.8" text-anchor="end" fill="#000">200MHz</text><text x="1542.3" y="288.2" font-size="21.8" text-anchor="end" fill="#000">250MHz</text><text x="1542.3" y="258.4" font-size="21.8" text-anchor="end" fill="#000">300MHz</text><text x="1542.3" y="228.6" font-size="21.8" text-anchor="end" fill="#000">350MHz</text><text x="1542.3" y="198.8" font-size="21.8" text-anchor="end" fill="#000">400MHz</text><text x="1542.3" y="169.0" font-size="21.8" text-anchor="end" fill="#000">450MHz</text><text x="1577.3" y="448.1" font-size="21.8" text-anchor="middle" fill="#000">13:52:40</text><text x="1793.1" y="448.1" font-size="21.8" text-anchor="middle" fill="#000">13:53:00</text><text x="2008.9" y="448.1" font-size="21.8" text-anchor="middle" fill="#000">13:53:20</text><text x="1815.0" y="150.3" font-size="28.1" text-anchor="middle" fill="#000">Clockspeed</text><rect x="2034.5" y="328.5" width="155.69999999999982" height="100.39999999999998" fill="#fff" fill-opacity=".8" stroke="#9a9a9a" stroke-width="1.2"/><rect x="2058.1" y="361.5" width="7" height="7" fill="#4a1ee6"/><text x="2072.6" y="371.6" font-size="21.8" text-anchor="start" fill="#000">GPU (Avg)</text><rect x="2058.1" y="388.9" width="7" height="7" fill="#47b03a"/><text x="2072.6" y="398.3" font-size="21.8" text-anchor="start" fill="#000">VRAM</text></svg>
<svg class="b" style="left:884px;top:483px" width="519" height="349" viewBox="884 483 519 349" font-family="Liberation Sans, sans-serif"><rect x="884" y="483" width="519" height="349" fill="#fff"/><path d="M993.00 527.2V798.4M1004.60 527.2V798.4M1016.20 527.2V798.4M1027.80 527.2V798.4M1039.40 527.2V798.4M1051.00 527.2V798.4M1062.60 527.2V798.4M1074.20 527.2V798.4M1085.80 527.2V798.4M1097.40 527.2V798.4M1109.00 527.2V798.4M1120.60 527.2V798.4M1132.20 527.2V798.4M1143.80 527.2V798.4M1155.40 527.2V798.4M1167.00 527.2V798.4M1178.60 527.2V798.4M1190.20 527.2V798.4M1201.80 527.2V798.4M1213.40 527.2V798.4M1225.00 527.2V798.4M1236.60 527.2V798.4M1248.20 527.2V798.4M1259.80 527.2V798.4M1271.40 527.2V798.4M1283.00 527.2V798.4M1294.60 527.2V798.4M1306.20 527.2V798.4M1317.80 527.2V798.4M1329.40 527.2V798.4M986.7 794.63H1334.8M986.7 790.86H1334.8M986.7 787.09H1334.8M986.7 783.32H1334.8M986.7 779.55H1334.8M986.7 775.78H1334.8M986.7 772.01H1334.8M986.7 768.24H1334.8M986.7 764.47H1334.8M986.7 760.70H1334.8M986.7 756.93H1334.8M986.7 753.16H1334.8M986.7 749.39H1334.8M986.7 745.62H1334.8M986.7 741.85H1334.8M986.7 738.08H1334.8M986.7 734.31H1334.8M986.7 730.54H1334.8M986.7 726.77H1334.8M986.7 723.00H1334.8M986.7 719.23H1334.8M986.7 715.46H1334.8M986.7 711.69H1334.8M986.7 707.92H1334.8M986.7 704.15H1334.8M986.7 700.38H1334.8M986.7 696.61H1334.8M986.7 692.84H1334.8M986.7 689.07H1334.8M986.7 685.30H1334.8M986.7 681.53H1334.8M986.7 677.76H1334.8M986.7 673.99H1334.8M986.7 670.22H1334.8M986.7 666.45H1334.8M986.7 662.68H1334.8M986.7 658.91H1334.8M986.7 655.14H1334.8M986.7 651.37H1334.8M986.7 647.60H1334.8M986.7 643.83H1334.8M986.7 640.06H1334.8M986.7 636.29H1334.8M986.7 632.52H1334.8M986.7 628.75H1334.8M986.7 624.98H1334.8M986.7 621.21H1334.8M986.7 617.44H1334.8M986.7 613.67H1334.8M986.7 609.90H1334.8M986.7 606.13H1334.8M986.7 602.36H1334.8M986.7 598.59H1334.8M986.7 594.82H1334.8M986.7 591.05H1334.8M986.7 587.28H1334.8M986.7 583.51H1334.8M986.7 579.74H1334.8M986.7 575.97H1334.8M986.7 572.20H1334.8M986.7 568.43H1334.8M986.7 564.66H1334.8M986.7 560.89H1334.8M986.7 557.12H1334.8M986.7 553.35H1334.8M986.7 549.58H1334.8M986.7 545.81H1334.8M986.7 542.04H1334.8M986.7 538.27H1334.8M986.7 534.50H1334.8M986.7 530.73H1334.8M986.7 526.96H1334.8" stroke="#000" stroke-opacity=".05" stroke-width="1" fill="none"/><path d="M1004.60 527.2V798.4M1120.60 527.2V798.4M1236.60 527.2V798.4M986.7 760.70H1334.8M986.7 723.00H1334.8M986.7 685.30H1334.8M986.7 647.60H1334.8M986.7 609.90H1334.8M986.7 572.20H1334.8M986.7 534.50H1334.8" stroke="#000" stroke-opacity=".12" stroke-width="1" fill="none"/><path d="M986.7 527.2L1332.0 527.2" stroke="#47b03a" stroke-width="2.0" fill="none" stroke-linejoin="round" stroke-linecap="butt"/><path d="M986.7 527.2V798.4H1334.8" stroke="#8a8a8a" stroke-width="1.3" fill="none"/><path d="M1334.8 527.2V798.4" stroke="#8a8a8a" stroke-width="1.3" fill="none"/><path d="M1004.60 798.4v3M1120.60 798.4v3M1236.60 798.4v3M986.7 798.40h-3M986.7 760.70h-3M986.7 723.00h-3M986.7 685.30h-3M986.7 647.60h-3M986.7 609.90h-3M986.7 572.20h-3M986.7 534.50h-3M1334.8 798.00h3M1334.8 743.90h3M1334.8 689.80h3M1334.8 635.70h3M1334.8 581.60h3M1334.8 527.50h3" stroke="#8a8a8a" stroke-width="1" fill="none"/><path d="M986.7 798.4L1332.3 798.4" stroke="#808000" stroke-width="2.2" fill="none" stroke-linejoin="round" stroke-linecap="butt"/><text x="986.0" y="806.5" font-size="21.8" text-anchor="end" fill="#000">0RPM</text><text x="986.0" y="768.8" font-size="21.8" text-anchor="end" fill="#000">500RPM</text><text x="986.0" y="731.1" font-size="21.8" text-anchor="end" fill="#000">1000RPM</text><text x="986.0" y="693.4" font-size="21.8" text-anchor="end" fill="#000">1500RPM</text><text x="986.0" y="655.7" font-size="21.8" text-anchor="end" fill="#000">2000RPM</text><text x="986.0" y="618.0" font-size="21.8" text-anchor="end" fill="#000">2500RPM</text><text x="986.0" y="580.3" font-size="21.8" text-anchor="end" fill="#000">3000RPM</text><text x="986.0" y="542.6" font-size="21.8" text-anchor="end" fill="#000">3500RPM</text><text x="1337.0" y="805.2" font-size="21.8" text-anchor="start" fill="#000">0</text><text x="1337.0" y="751.1" font-size="21.8" text-anchor="start" fill="#000">20</text><text x="1337.0" y="697.0" font-size="21.8" text-anchor="start" fill="#000">40</text><text x="1337.0" y="642.9" font-size="21.8" text-anchor="start" fill="#000">60</text><text x="1337.0" y="588.8" font-size="21.8" text-anchor="start" fill="#000">80</text><text x="1337.0" y="534.7" font-size="21.8" text-anchor="start" fill="#000">100</text><text x="1004.6" y="817.0" font-size="21.8" text-anchor="middle" fill="#000">13:52:40</text><text x="1120.6" y="817.0" font-size="21.8" text-anchor="middle" fill="#000">13:53:00</text><text x="1236.6" y="817.0" font-size="21.8" text-anchor="middle" fill="#000">13:53:20</text><text x="1143.2" y="520.1" font-size="28.1" text-anchor="middle" fill="#000">Fan speed</text><rect x="1167.5" y="643.5" width="166.70000000000005" height="154.10000000000002" fill="#fff" fill-opacity=".8" stroke="#9a9a9a" stroke-width="1.2"/><rect x="1192.2" y="676.1" width="7" height="7" fill="#4a1ee6"/><text x="1206.2" y="685.7" font-size="21.8" text-anchor="start" fill="#000">Current</text><rect x="1192.2" y="703.3" width="7" height="7" fill="#47b03a"/><text x="1206.2" y="713.7" font-size="21.8" text-anchor="start" fill="#000">Maximum</text><rect x="1192.2" y="730.5" width="7" height="7" fill="#22dcff"/><text x="1206.2" y="740.9" font-size="21.8" text-anchor="start" fill="#000">Minimum</text><rect x="1192.2" y="757.7" width="7" height="7" fill="#808000"/><text x="1206.2" y="766.9" font-size="21.8" text-anchor="start" fill="#000">Percentage</text></svg>
<svg class="b" style="left:1423px;top:483px" width="784" height="349" viewBox="1423 483 784 349" font-family="Liberation Sans, sans-serif"><rect x="1423" y="483" width="784" height="349" fill="#fff"/><path d="M1521.90 526.0V798.5M1544.60 526.0V798.5M1567.30 526.0V798.5M1590.00 526.0V798.5M1612.70 526.0V798.5M1635.40 526.0V798.5M1658.10 526.0V798.5M1680.80 526.0V798.5M1703.50 526.0V798.5M1726.20 526.0V798.5M1748.90 526.0V798.5M1771.60 526.0V798.5M1794.30 526.0V798.5M1817.00 526.0V798.5M1839.70 526.0V798.5M1862.40 526.0V798.5M1885.10 526.0V798.5M1907.80 526.0V798.5M1930.50 526.0V798.5M1953.20 526.0V798.5M1975.90 526.0V798.5M1998.60 526.0V798.5M2021.30 526.0V798.5M2044.00 526.0V798.5M2066.70 526.0V798.5M2089.40 526.0V798.5M2112.10 526.0V798.5M2134.80 526.0V798.5M2157.50 526.0V798.5M2180.20 526.0V798.5M1508.5 793.63H2189.8M1508.5 788.76H2189.8M1508.5 783.89H2189.8M1508.5 779.02H2189.8M1508.5 774.15H2189.8M1508.5 769.28H2189.8M1508.5 764.41H2189.8M1508.5 759.54H2189.8M1508.5 754.67H2189.8M1508.5 749.80H2189.8M1508.5 744.93H2189.8M1508.5 740.06H2189.8M1508.5 735.19H2189.8M1508.5 730.32H2189.8M1508.5 725.45H2189.8M1508.5 720.58H2189.8M1508.5 715.71H2189.8M1508.5 710.84H2189.8M1508.5 705.97H2189.8M1508.5 701.10H2189.8M1508.5 696.23H2189.8M1508.5 691.36H2189.8M1508.5 686.49H2189.8M1508.5 681.62H2189.8M1508.5 676.75H2189.8M1508.5 671.88H2189.8M1508.5 667.01H2189.8M1508.5 662.14H2189.8M1508.5 657.27H2189.8M1508.5 652.40H2189.8M1508.5 647.53H2189.8M1508.5 642.66H2189.8M1508.5 637.79H2189.8M1508.5 632.92H2189.8M1508.5 628.05H2189.8M1508.5 623.18H2189.8M1508.5 618.31H2189.8M1508.5 613.44H2189.8M1508.5 608.57H2189.8M1508.5 603.70H2189.8M1508.5 598.83H2189.8M1508.5 593.96H2189.8M1508.5 589.09H2189.8M1508.5 584.22H2189.8M1508.5 579.35H2189.8M1508.5 574.48H2189.8M1508.5 569.61H2189.8M1508.5 564.74H2189.8M1508.5 559.87H2189.8M1508.5 555.00H2189.8M1508.5 550.13H2189.8M1508.5 545.26H2189.8M1508.5 540.39H2189.8M1508.5 535.52H2189.8M1508.5 530.65H2189.8M1508.5 525.78H2189.8" stroke="#000" stroke-opacity=".05" stroke-width="1" fill="none"/><path d="M1544.60 526.0V798.5M1771.60 526.0V798.5M1998.60 526.0V798.5M1508.5 749.80H2189.8M1508.5 701.10H2189.8M1508.5 652.40H2189.8M1508.5 603.70H2189.8M1508.5 555.00H2189.8" stroke="#000" stroke-opacity=".12" stroke-width="1" fill="none"/><path d="M1508.5 765.2L1513.6 768.4L1517.9 765.6L1522.6 765.6L1526.1 766.1L1531.1 764.8L1533.8 768.4L1537.5 764.8L1540.3 768.4L1543.1 767.0L1546.0 764.8L1550.2 767.0L1555.3 767.0L1559.4 766.1L1564.6 766.1L1568.6 766.6L1572.0 766.6L1576.0 767.0L1579.4 765.5L1582.4 767.0L1586.5 764.8L1590.1 764.4L1594.6 767.0L1597.3 764.8L1601.2 764.4L1604.9 765.2L1608.7 765.9L1612.3 764.8L1616.9 764.8L1619.7 767.5L1623.7 765.2L1628.2 767.5L1632.4 765.6L1635.3 768.4L1638.3 765.2L1641.3 765.9L1645.0 765.5L1647.8 764.4L1651.9 765.2L1655.4 765.2L1659.5 767.0L1664.2 765.6L1669.0 767.5L1672.8 765.5L1675.6 767.5L1679.9 765.5L1684.6 767.5L1689.1 765.5L1692.6 765.9L1696.1 767.0L1699.0 766.1L1702.2 767.5L1705.1 764.8L1708.7 765.9L1711.6 765.9L1715.2 767.5L1720.1 768.4L1724.9 767.5L1729.4 765.2L1733.7 768.4L1738.8 766.6L1741.7 766.6L1744.9 764.8L1747.5 767.0L1750.6 767.5L1753.2 768.4L1757.2 767.0L1761.2 766.6L1765.6 764.4L1770.7 765.5L1775.1 766.1L1778.8 765.5L1783.5 768.4L1787.2 768.4L1790.0 765.5L1793.7 764.8L1796.4 764.8L1800.2 765.6L1803.7 766.1L1806.5 767.0L1809.5 765.6L1814.6 767.0L1817.3 764.8L1821.5 766.6L1825.7 765.2L1829.9 765.9L1832.8 765.9L1838.0 765.9L1841.8 767.5L1844.7 765.6L1849.2 767.5L1853.0 766.6L1857.0 764.8L1862.1 764.4L1865.6 764.4L1870.6 764.4L1874.0 765.5L1878.8 767.5L1882.7 766.6L1886.3 764.8L1890.3 764.4L1893.7 764.8L1897.9 764.8L1902.6 768.4L1907.1 764.8L1910.2 765.9L1913.8 766.1L1918.9 767.5L1922.8 764.8L1927.2 765.2L1930.9 765.2L1936.0 765.2L1938.8 765.6L1942.0 764.8L1945.5 765.9L1949.7 767.0L1954.5 765.9L1959.5 765.2L1964.1 765.6L1968.9 765.6L1973.9 764.8L1977.7 766.6L1981.5 765.5L1984.9 768.4L1988.7 765.6L1993.2 766.6L1998.4 766.1L2001.4 765.9L2006.1 766.6L2010.3 767.0L2015.4 765.5L2020.5 766.6L2024.5 766.6L2027.1 765.5L2030.0 766.6L2033.7 764.8L2038.5 764.8L2041.2 764.8L2044.5 764.8L2049.1 765.2L2052.4 768.4L2057.1 766.1L2062.1 765.2L2067.0 765.5L2071.2 764.4L2074.9 764.4L2077.8 766.6L2081.8 766.1L2086.6 766.6L2090.8 766.6L2093.9 765.9L2098.1 765.6L2102.1 765.2L2106.5 764.4L2110.5 765.6L2115.4 766.1L2118.7 767.5L2121.4 765.6L2125.3 764.4L2128.0 765.6L2131.7 767.0L2136.9 767.0L2140.8 767.5L2144.6 764.4L2149.3 764.4L2154.3 764.4L2159.2 767.5L2164.2 764.8L2169.0 766.6L2172.7 768.4L2176.4 765.6L2180.8 768.4L2183.5 765.5L2186.0 765.9" stroke="#4a1ee6" stroke-width="2.4" fill="none" stroke-linejoin="round" stroke-linecap="round"/><path d="M1508.5 526.0L2186.0 526.0" stroke="#47b03a" stroke-width="2.0" fill="none" stroke-linejoin="round" stroke-linecap="butt"/><path d="M1508.5 526.0V798.5H2189.8" stroke="#8a8a8a" stroke-width="1.3" fill="none"/><path d="M1544.60 798.5v3M1771.60 798.5v3M1998.60 798.5v3M1508.5 798.50h-3M1508.5 749.80h-3M1508.5 701.10h-3M1508.5 652.40h-3M1508.5 603.70h-3M1508.5 555.00h-3" stroke="#8a8a8a" stroke-width="1" fill="none"/><text x="1507.3" y="806.5" font-size="21.8" text-anchor="end" fill="#000">0W</text><text x="1507.3" y="757.8" font-size="21.8" text-anchor="end" fill="#000">50W</text><text x="1507.3" y="709.1" font-size="21.8" text-anchor="end" fill="#000">100W</text><text x="1507.3" y="660.4" font-size="21.8" text-anchor="end" fill="#000">150W</text><text x="1507.3" y="611.7" font-size="21.8" text-anchor="end" fill="#000">200W</text><text x="1507.3" y="563.0" font-size="21.8" text-anchor="end" fill="#000">250W</text><text x="1544.6" y="816.8" font-size="21.8" text-anchor="middle" fill="#000">13:52:40</text><text x="1771.6" y="816.8" font-size="21.8" text-anchor="middle" fill="#000">13:53:00</text><text x="1998.6" y="816.8" font-size="21.8" text-anchor="middle" fill="#000">13:53:20</text><text x="1814.5" y="519.5" font-size="28.1" text-anchor="middle" fill="#000">Power usage</text><rect x="2054.3" y="698.2" width="135.89999999999964" height="99.39999999999998" fill="#fff" fill-opacity=".8" stroke="#9a9a9a" stroke-width="1.2"/><rect x="2077.6" y="730.5" width="7" height="7" fill="#4a1ee6"/><text x="2092.5" y="740.5" font-size="21.8" text-anchor="start" fill="#000">Average</text><rect x="2077.6" y="758.1" width="7" height="7" fill="#47b03a"/><text x="2092.5" y="768.5" font-size="21.8" text-anchor="start" fill="#000">Limit</text></svg>
<span class="t" style="left:1942.50px;top:861.72px;font-size:14.50px;line-height:14.50px;font-weight:400;color:#fff;letter-spacing:0.067px;">Time period (seconds):</span>
<div class="b" style="left:2097.00px;top:852.00px;width:110.00px;height:34.00px;background:#393939;border-radius:6px;"></div>
<div class="b" style="left:2141.30px;top:852.00px;width:1.00px;height:34.00px;background:#4a4a4a;border-radius:0px;"></div>
<div class="b" style="left:2174.20px;top:852.00px;width:1.00px;height:34.00px;background:#4a4a4a;border-radius:0px;"></div>
<div class="b" style="left:2103.00px;top:860.20px;width:17.00px;height:16.60px;background:#505050;border-radius:0px;"></div>
<span class="t" style="left:2103.80px;top:862.02px;font-size:13.80px;line-height:13.80px;font-weight:400;color:#fff;letter-spacing:-0.246px;">60</span>
<div class="b" style="left:2152.70px;top:868.00px;width:10.60px;height:2.00px;background:#fff;border-radius:0px;"></div>
<div class="b" style="left:2185.70px;top:868.00px;width:10.60px;height:2.00px;background:#fff;border-radius:0px;"></div>
<div class="b" style="left:2190.00px;top:863.70px;width:2.00px;height:10.60px;background:#fff;border-radius:0px;"></div>
</div></body></html>
